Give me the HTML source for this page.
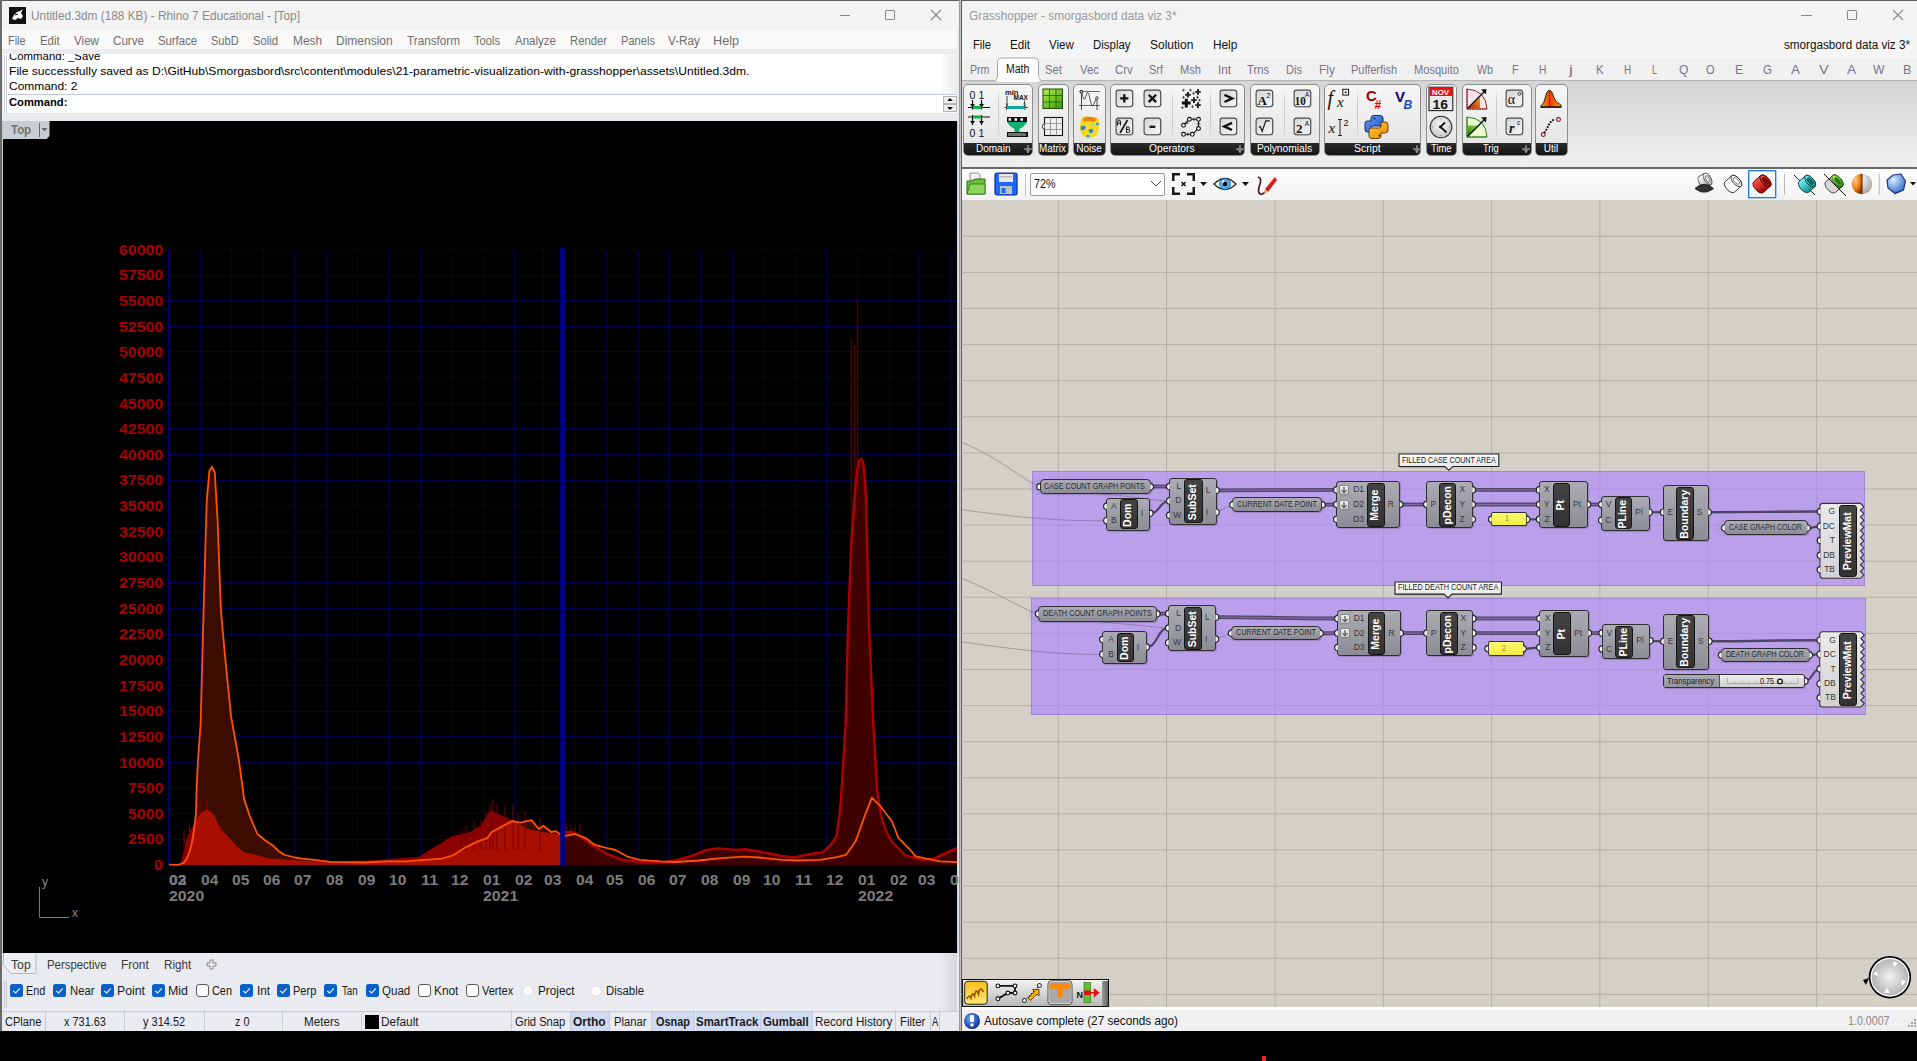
<!DOCTYPE html>
<html><head><meta charset="utf-8"><style>
html,body{margin:0;padding:0;background:#000;width:1917px;height:1061px;overflow:hidden;}
body{position:relative;font-family:"Liberation Sans",sans-serif;}
body div, body svg{position:absolute;}
body div div, body div svg{position:absolute;}

</style></head><body>
<div style="left:0px;top:0px;width:959px;height:1031px;background:#e9ebef;"></div>
<div style="left:0px;top:0px;width:959px;height:1px;background:#5a5a5a;"></div>
<div style="left:0px;top:0px;width:2px;height:1031px;background:#6b6b6b;"></div>
<div style="left:2px;top:1px;width:956px;height:29px;background:#f3f3f3;"></div>
<svg style="left:9px;top:7px;width:17px;height:17px" viewBox="0 0 17 17"><rect x="0" y="0" width="17" height="17" fill="#111"/><path d="M3 12 L5 8 L8 5 L11 4 L14 2 L12 6 L14 9 L12 12 L9 11 L6 13 Z" fill="#fff"/><path d="M6 8 L9 7" stroke="#111" stroke-width="1"/></svg>
<div style="left:31.30px;top:9.73px;font:12px/12px 'Liberation Sans', sans-serif;color:#8a8a8a;white-space:pre;transform:scaleX(0.9860);transform-origin:0 0;">Untitled.3dm (188 KB) - Rhino 7 Educational - [Top]</div>
<div style="left:840px;top:15px;width:10px;height:1px;background:#888;"></div>
<div style="left:885px;top:10px;width:10px;height:10px;border:1px solid #888;box-sizing:border-box;border-radius:1px;"></div>
<svg style="left:930px;top:9px;width:12px;height:12px" viewBox="0 0 12 12"><path d="M1 1 L11 11 M11 1 L1 11" stroke="#888" stroke-width="1.1"/></svg>
<div style="left:2px;top:30px;width:955px;height:19px;background:#f9f9f9;"></div>
<div style="left:8.30px;top:34.73px;font:12px/12px 'Liberation Sans', sans-serif;color:#6e6e6e;white-space:pre;transform:scaleX(0.9050);transform-origin:0 0;">File</div>
<div style="left:40.00px;top:34.73px;font:12px/12px 'Liberation Sans', sans-serif;color:#6e6e6e;white-space:pre;transform:scaleX(0.9478);transform-origin:0 0;">Edit</div>
<div style="left:74.00px;top:34.73px;font:12px/12px 'Liberation Sans', sans-serif;color:#6e6e6e;white-space:pre;transform:scaleX(0.9692);transform-origin:0 0;">View</div>
<div style="left:113.00px;top:34.73px;font:12px/12px 'Liberation Sans', sans-serif;color:#6e6e6e;white-space:pre;transform:scaleX(0.9684);transform-origin:0 0;">Curve</div>
<div style="left:158.00px;top:34.73px;font:12px/12px 'Liberation Sans', sans-serif;color:#6e6e6e;white-space:pre;transform:scaleX(0.9430);transform-origin:0 0;">Surface</div>
<div style="left:211.00px;top:34.73px;font:12px/12px 'Liberation Sans', sans-serif;color:#6e6e6e;white-space:pre;transform:scaleX(0.9194);transform-origin:0 0;">SubD</div>
<div style="left:253.00px;top:34.73px;font:12px/12px 'Liberation Sans', sans-serif;color:#6e6e6e;white-space:pre;transform:scaleX(0.9369);transform-origin:0 0;">Solid</div>
<div style="left:293.00px;top:34.73px;font:12px/12px 'Liberation Sans', sans-serif;color:#6e6e6e;white-space:pre;transform:scaleX(0.9883);transform-origin:0 0;">Mesh</div>
<div style="left:336.00px;top:34.73px;font:12px/12px 'Liberation Sans', sans-serif;color:#6e6e6e;white-space:pre;">Dimension</div>
<div style="left:407.00px;top:34.73px;font:12px/12px 'Liberation Sans', sans-serif;color:#6e6e6e;white-space:pre;transform:scaleX(0.9773);transform-origin:0 0;">Transform</div>
<div style="left:474.00px;top:34.73px;font:12px/12px 'Liberation Sans', sans-serif;color:#6e6e6e;white-space:pre;transform:scaleX(0.9281);transform-origin:0 0;">Tools</div>
<div style="left:515.00px;top:34.73px;font:12px/12px 'Liberation Sans', sans-serif;color:#6e6e6e;white-space:pre;transform:scaleX(0.9603);transform-origin:0 0;">Analyze</div>
<div style="left:570.00px;top:34.73px;font:12px/12px 'Liberation Sans', sans-serif;color:#6e6e6e;white-space:pre;transform:scaleX(0.9401);transform-origin:0 0;">Render</div>
<div style="left:621.00px;top:34.73px;font:12px/12px 'Liberation Sans', sans-serif;color:#6e6e6e;white-space:pre;transform:scaleX(0.9266);transform-origin:0 0;">Panels</div>
<div style="left:668.00px;top:34.73px;font:12px/12px 'Liberation Sans', sans-serif;color:#6e6e6e;white-space:pre;transform:scaleX(0.9792);transform-origin:0 0;">V-Ray</div>
<div style="left:713.00px;top:34.73px;font:12px/12px 'Liberation Sans', sans-serif;color:#6e6e6e;white-space:pre;transform:scaleX(1.0535);transform-origin:0 0;">Help</div>
<div style="left:3px;top:54px;width:954px;height:59px;background:#fff;"></div>
<div style="left:942px;top:54px;width:15px;height:41px;background:linear-gradient(90deg,#fbfbfb,#ececec);"></div>
<div style="left:4px;top:55px;width:1px;height:58px;background:#c9ced8;"></div>
<div style="left:6px;top:55px;width:1px;height:58px;background:#c9ced8;"></div>
<div style="left:0;top:54px;width:942px;height:41px;overflow:hidden">
<div style="left:9.00px;top:-2.80px;font:11.5px/11.5px 'Liberation Sans', sans-serif;color:#000;white-space:pre;transform:scaleX(0.9930);transform-origin:0 0;">Command: _Save</div>
<div style="left:9.00px;top:12.20px;font:11.5px/11.5px 'Liberation Sans', sans-serif;color:#000;white-space:pre;transform:scaleX(1.0502);transform-origin:0 0;">File successfully saved as D:\GitHub\Smorgasbord\src\content\modules\21-parametric-visualization-with-grasshopper\assets\Untitled.3dm.</div>
<div style="left:9.00px;top:26.90px;font:11.5px/11.5px 'Liberation Sans', sans-serif;color:#000;white-space:pre;transform:scaleX(1.0390);transform-origin:0 0;">Command: 2</div>
</div>
<div style="left:8px;top:94px;width:949px;height:1px;background:#c0c9dc;"></div>
<div style="left:9.00px;top:96.80px;font:11.5px/11.5px 'Liberation Sans', sans-serif;font-weight:bold;color:#000;white-space:pre;transform:scaleX(0.9724);transform-origin:0 0;">Command:</div>
<div style="left:943px;top:96px;width:14px;height:8px;background:#f0f0f0;border:1px solid #b5b5b5;box-sizing:border-box;"></div>
<div style="left:943px;top:104px;width:14px;height:8px;background:#f0f0f0;border:1px solid #b5b5b5;box-sizing:border-box;"></div>
<svg style="left:943px;top:96px;width:14px;height:16px" viewBox="0 0 14 16"><path d="M4 5 L10 5 L7 2 Z M4 11 L10 11 L7 14 Z" fill="#111"/></svg>
<div style="left:2px;top:121px;width:1px;height:832px;background:#c8c8c8;"></div>
<div style="left:3px;top:121px;width:954px;height:832px;background:#000;"></div>
<div style="left:957px;top:121px;width:2px;height:832px;background:#d3d9e3;"></div>
<svg style="left:3px;top:121px;width:954px;height:832px" viewBox="3 121 954 832">
<path d="M169 864.5 H960 M169 839.5 H960 M169 813.5 H960 M169 787.5 H960 M169 762.5 H960 M169 736.5 H960 M169 711.5 H960 M169 685.5 H960 M169 659.5 H960 M169 634.5 H960 M169 608.5 H960 M169 582.5 H960 M169 557.5 H960 M169 531.5 H960 M169 505.5 H960 M169 480.5 H960 M169 454.5 H960 M169 428.5 H960 M169 403.5 H960 M169 377.5 H960 M169 351.5 H960 M169 326.5 H960 M169 300.5 H960 M169 275.5 H960 M169 249.5 H960" stroke="#000054" stroke-width="1" fill="none"/>
<path d="M168.5 249.4 V864.9 M200.5 249.4 V864.9 M231.5 249.4 V864.9 M263.5 249.4 V864.9 M294.5 249.4 V864.9 M326.5 249.4 V864.9 M357.5 249.4 V864.9 M388.5 249.4 V864.9 M420.5 249.4 V864.9 M451.5 249.4 V864.9 M483.5 249.4 V864.9 M514.5 249.4 V864.9 M543.5 249.4 V864.9 M575.5 249.4 V864.9 M606.5 249.4 V864.9 M638.5 249.4 V864.9 M668.5 249.4 V864.9 M700.5 249.4 V864.9 M732.5 249.4 V864.9 M763.5 249.4 V864.9 M795.5 249.4 V864.9 M826.5 249.4 V864.9 M857.5 249.4 V864.9 M889.5 249.4 V864.9 M918.5 249.4 V864.9 M950.5 249.4 V864.9" stroke="#000042" stroke-width="1" fill="none"/>
<path d="M169.2 249 V865" stroke="#000080" stroke-width="1.8"/>
<polygon points="169.0,864.7 178.0,864.8 183.5,863.0 186.5,859.0 189.4,852.0 191.5,845.0 193.4,834.0 195.0,822.0 196.0,813.0 196.7,786.0 198.0,760.0 200.6,724.0 203.8,602.0 206.7,500.9 209.5,470.4 212.0,466.8 214.8,472.5 217.6,521.0 220.9,610.0 224.9,655.0 231.0,715.9 238.9,760.0 244.2,799.6 249.5,815.4 257.4,834.0 265.3,840.5 273.3,845.8 278.5,851.0 285.0,855.0 295.0,857.5 302.0,858.6 314.0,859.9 330.4,861.9 365.0,862.5 387.0,861.4 405.7,861.4 421.4,860.2 441.7,858.6 452.7,855.5 465.2,847.6 477.7,841.4 487.1,838.2 491.8,832.0 512.1,821.0 520.0,822.6 531.7,820.2 538.7,828.9 543.4,825.7 551.3,832.0 556.0,831.2 562.2,836.3 562.2,864.9 169,864.9" fill="#3c0c00"/>
<polygon points="169.0,864.7 178.0,864.5 180.8,863.0 184.8,846.0 187.4,836.5 191.4,828.6 196.7,818.0 202.0,812.0 207.2,809.5 213.8,814.2 220.4,828.6 227.0,835.2 236.3,845.8 244.2,852.4 257.4,855.0 268.0,858.3 285.0,859.6 293.9,859.9 322.0,862.0 371.3,860.2 418.2,857.0 430.8,849.2 451.1,836.7 469.9,832.0 480.8,825.7 490.2,810.0 496.5,813.2 512.1,820.2 527.8,828.9 543.4,832.0 562.2,835.1 562.2,864.9 169,864.9" fill="#8c0000"/>
<clipPath id="cl"><polygon points="169.0,864.7 178.0,864.5 180.8,863.0 184.8,846.0 187.4,836.5 191.4,828.6 196.7,818.0 202.0,812.0 207.2,809.5 213.8,814.2 220.4,828.6 227.0,835.2 236.3,845.8 244.2,852.4 257.4,855.0 268.0,858.3 285.0,859.6 293.9,859.9 322.0,862.0 371.3,860.2 418.2,857.0 430.8,849.2 451.1,836.7 469.9,832.0 480.8,825.7 490.2,810.0 496.5,813.2 512.1,820.2 527.8,828.9 543.4,832.0 562.2,835.1 562.2,864.9 169,864.9"/></clipPath>
<polygon clip-path="url(#cl)" points="169.0,864.7 178.0,864.8 183.5,863.0 186.5,859.0 189.4,852.0 191.5,845.0 193.4,834.0 195.0,822.0 196.0,813.0 196.7,786.0 198.0,760.0 200.6,724.0 203.8,602.0 206.7,500.9 209.5,470.4 212.0,466.8 214.8,472.5 217.6,521.0 220.9,610.0 224.9,655.0 231.0,715.9 238.9,760.0 244.2,799.6 249.5,815.4 257.4,834.0 265.3,840.5 273.3,845.8 278.5,851.0 285.0,855.0 295.0,857.5 302.0,858.6 314.0,859.9 330.4,861.9 365.0,862.5 387.0,861.4 405.7,861.4 421.4,860.2 441.7,858.6 452.7,855.5 465.2,847.6 477.7,841.4 487.1,838.2 491.8,832.0 512.1,821.0 520.0,822.6 531.7,820.2 538.7,828.9 543.4,825.7 551.3,832.0 556.0,831.2 562.2,836.3 562.2,864.9 169,864.9" fill="rgba(255,62,0,0.24)"/>
<path d="M481 820 V850 M486 812 V850 M490 803 V850 M493 799 V850 M497 804 V850 M505 806 V850 M513 806 V850 M518 813 V850 M525 811 V850 M540 818 V850 M456 834 V850 M462 829 V850 M466 826 V850 M474 822 V850 M566 822 V850 M571 826 V850 M575 826 V850 M580 823 V850" stroke="#7a0000" stroke-width="1" fill="none"/>
<path d="M189.4 823 V832 M200 802 V814 M206.6 799.5 V810 M221 826 V831 M184 830 V846" stroke="#8a0000" stroke-width="1" fill="none"/>
<polygon points="562.2,835.1 564.0,832.5 571.6,831.8 577.7,834.8 592.8,845.4 608.0,854.5 623.0,859.8 638.2,862.0 660.9,862.8 676.0,860.5 691.2,856.0 706.3,849.9 718.4,848.4 736.5,849.9 745.6,849.2 766.8,853.0 781.9,856.0 794.0,857.5 812.2,853.7 822.8,852.2 830.3,845.4 836.4,836.3 839.4,815.1 840.9,800.0 842.2,780.0 845.6,724.0 847.8,635.6 851.1,546.7 855.0,491.0 857.5,468.0 859.4,460.6 861.3,459.0 863.3,463.3 865.0,480.0 866.1,502.2 868.9,624.4 873.3,724.4 877.2,791.0 881.0,815.0 885.6,830.0 891.7,841.6 905.4,855.4 922.6,859.7 933.0,858.9 960.0,846.8 960,864.9 562.2,864.9" fill="#3e0000"/>
<path d="M851.5 338 V560 M857.5 300 V500 M855 345 V520" stroke="#500000" stroke-width="1.6"/>
<polyline points="562.2,835.1 564.0,832.5 571.6,831.8 577.7,834.8 592.8,845.4 608.0,854.5 623.0,859.8 638.2,862.0 660.9,862.8 676.0,860.5 691.2,856.0 706.3,849.9 718.4,848.4 736.5,849.9 745.6,849.2 766.8,853.0 781.9,856.0 794.0,857.5 812.2,853.7 822.8,852.2 830.3,845.4 836.4,836.3 839.4,815.1 840.9,800.0 842.2,780.0 845.6,724.0 847.8,635.6 851.1,546.7 855.0,491.0 857.5,468.0 859.4,460.6 861.3,459.0 863.3,463.3 865.0,480.0 866.1,502.2 868.9,624.4 873.3,724.4 877.2,791.0 881.0,815.0 885.6,830.0 891.7,841.6 905.4,855.4 922.6,859.7 933.0,858.9 960.0,846.8" stroke="#b00000" stroke-width="2.4" stroke-linejoin="round" fill="none"/>
<polyline points="169.0,864.7 178.0,864.8 183.5,863.0 186.5,859.0 189.4,852.0 191.5,845.0 193.4,834.0 195.0,822.0 196.0,813.0 196.7,786.0 198.0,760.0 200.6,724.0 203.8,602.0 206.7,500.9 209.5,470.4 212.0,466.8 214.8,472.5 217.6,521.0 220.9,610.0 224.9,655.0 231.0,715.9 238.9,760.0 244.2,799.6 249.5,815.4 257.4,834.0 265.3,840.5 273.3,845.8 278.5,851.0 285.0,855.0 295.0,857.5 302.0,858.6 314.0,859.9 330.4,861.9 365.0,862.5 387.0,861.4 405.7,861.4 421.4,860.2 441.7,858.6 452.7,855.5 465.2,847.6 477.7,841.4 487.1,838.2 491.8,832.0 512.1,821.0 520.0,822.6 531.7,820.2 538.7,828.9 543.4,825.7 551.3,832.0 556.0,831.2 562.6,836.3 574.7,834.0 585.3,837.8 594.3,844.6 605.0,847.7 615.5,850.0 627.6,856.7 639.7,859.8 660.9,861.3 676.0,862.0 698.7,860.5 721.4,858.2 744.0,856.7 759.2,857.5 781.9,859.8 797.0,860.5 819.7,859.8 836.6,857.1 845.0,855.2 846.9,853.7 855.5,841.6 864.1,817.5 871.9,797.7 881.3,807.2 891.7,821.0 898.5,838.2 908.9,848.5 915.8,856.3 939.9,861.4 960.0,862.3" stroke="#ff5200" stroke-width="1.8" fill="none" stroke-linejoin="round"/>
<rect x="560.2" y="247.2" width="4.7" height="618.5" rx="1.5" fill="#00008c"/>
</svg>
<div style="left:154.48px;top:858.13px;font:14.3px/14.3px 'Liberation Sans', sans-serif;font-weight:bold;color:#a80000;white-space:pre;transform:scaleX(1.1090);transform-origin:0 0;">0</div>
<div style="left:128.02px;top:832.49px;font:14.3px/14.3px 'Liberation Sans', sans-serif;font-weight:bold;color:#a80000;white-space:pre;transform:scaleX(1.1090);transform-origin:0 0;">2500</div>
<div style="left:128.02px;top:806.84px;font:14.3px/14.3px 'Liberation Sans', sans-serif;font-weight:bold;color:#a80000;white-space:pre;transform:scaleX(1.1090);transform-origin:0 0;">5000</div>
<div style="left:128.02px;top:781.20px;font:14.3px/14.3px 'Liberation Sans', sans-serif;font-weight:bold;color:#a80000;white-space:pre;transform:scaleX(1.1090);transform-origin:0 0;">7500</div>
<div style="left:119.20px;top:755.55px;font:14.3px/14.3px 'Liberation Sans', sans-serif;font-weight:bold;color:#a80000;white-space:pre;transform:scaleX(1.1090);transform-origin:0 0;">10000</div>
<div style="left:119.20px;top:729.90px;font:14.3px/14.3px 'Liberation Sans', sans-serif;font-weight:bold;color:#a80000;white-space:pre;transform:scaleX(1.1090);transform-origin:0 0;">12500</div>
<div style="left:119.20px;top:704.26px;font:14.3px/14.3px 'Liberation Sans', sans-serif;font-weight:bold;color:#a80000;white-space:pre;transform:scaleX(1.1090);transform-origin:0 0;">15000</div>
<div style="left:119.20px;top:678.61px;font:14.3px/14.3px 'Liberation Sans', sans-serif;font-weight:bold;color:#a80000;white-space:pre;transform:scaleX(1.1090);transform-origin:0 0;">17500</div>
<div style="left:119.20px;top:652.97px;font:14.3px/14.3px 'Liberation Sans', sans-serif;font-weight:bold;color:#a80000;white-space:pre;transform:scaleX(1.1090);transform-origin:0 0;">20000</div>
<div style="left:119.20px;top:627.32px;font:14.3px/14.3px 'Liberation Sans', sans-serif;font-weight:bold;color:#a80000;white-space:pre;transform:scaleX(1.1090);transform-origin:0 0;">22500</div>
<div style="left:119.20px;top:601.67px;font:14.3px/14.3px 'Liberation Sans', sans-serif;font-weight:bold;color:#a80000;white-space:pre;transform:scaleX(1.1090);transform-origin:0 0;">25000</div>
<div style="left:119.20px;top:576.03px;font:14.3px/14.3px 'Liberation Sans', sans-serif;font-weight:bold;color:#a80000;white-space:pre;transform:scaleX(1.1090);transform-origin:0 0;">27500</div>
<div style="left:119.20px;top:550.38px;font:14.3px/14.3px 'Liberation Sans', sans-serif;font-weight:bold;color:#a80000;white-space:pre;transform:scaleX(1.1090);transform-origin:0 0;">30000</div>
<div style="left:119.20px;top:524.74px;font:14.3px/14.3px 'Liberation Sans', sans-serif;font-weight:bold;color:#a80000;white-space:pre;transform:scaleX(1.1090);transform-origin:0 0;">32500</div>
<div style="left:119.20px;top:499.09px;font:14.3px/14.3px 'Liberation Sans', sans-serif;font-weight:bold;color:#a80000;white-space:pre;transform:scaleX(1.1090);transform-origin:0 0;">35000</div>
<div style="left:119.20px;top:473.44px;font:14.3px/14.3px 'Liberation Sans', sans-serif;font-weight:bold;color:#a80000;white-space:pre;transform:scaleX(1.1090);transform-origin:0 0;">37500</div>
<div style="left:119.20px;top:447.80px;font:14.3px/14.3px 'Liberation Sans', sans-serif;font-weight:bold;color:#a80000;white-space:pre;transform:scaleX(1.1090);transform-origin:0 0;">40000</div>
<div style="left:119.20px;top:422.15px;font:14.3px/14.3px 'Liberation Sans', sans-serif;font-weight:bold;color:#a80000;white-space:pre;transform:scaleX(1.1090);transform-origin:0 0;">42500</div>
<div style="left:119.20px;top:396.51px;font:14.3px/14.3px 'Liberation Sans', sans-serif;font-weight:bold;color:#a80000;white-space:pre;transform:scaleX(1.1090);transform-origin:0 0;">45000</div>
<div style="left:119.20px;top:370.86px;font:14.3px/14.3px 'Liberation Sans', sans-serif;font-weight:bold;color:#a80000;white-space:pre;transform:scaleX(1.1090);transform-origin:0 0;">47500</div>
<div style="left:119.20px;top:345.21px;font:14.3px/14.3px 'Liberation Sans', sans-serif;font-weight:bold;color:#a80000;white-space:pre;transform:scaleX(1.1090);transform-origin:0 0;">50000</div>
<div style="left:119.20px;top:319.57px;font:14.3px/14.3px 'Liberation Sans', sans-serif;font-weight:bold;color:#a80000;white-space:pre;transform:scaleX(1.1090);transform-origin:0 0;">52500</div>
<div style="left:119.20px;top:293.92px;font:14.3px/14.3px 'Liberation Sans', sans-serif;font-weight:bold;color:#a80000;white-space:pre;transform:scaleX(1.1090);transform-origin:0 0;">55000</div>
<div style="left:119.20px;top:268.28px;font:14.3px/14.3px 'Liberation Sans', sans-serif;font-weight:bold;color:#a80000;white-space:pre;transform:scaleX(1.1090);transform-origin:0 0;">57500</div>
<div style="left:119.20px;top:242.63px;font:14.3px/14.3px 'Liberation Sans', sans-serif;font-weight:bold;color:#a80000;white-space:pre;transform:scaleX(1.1090);transform-origin:0 0;">60000</div>
<div style="left:169.00px;top:873.47px;font:14px/14px 'Liberation Sans', sans-serif;font-weight:bold;color:#7c7c7c;white-space:pre;transform:scaleX(1.1173);transform-origin:0 0;">02</div>
<div style="left:169.00px;top:873.47px;font:14px/14px 'Liberation Sans', sans-serif;font-weight:bold;color:#7c7c7c;white-space:pre;transform:scaleX(1.1173);transform-origin:0 0;">03</div>
<div style="left:200.82px;top:873.47px;font:14px/14px 'Liberation Sans', sans-serif;font-weight:bold;color:#7c7c7c;white-space:pre;transform:scaleX(1.1173);transform-origin:0 0;">04</div>
<div style="left:231.62px;top:873.47px;font:14px/14px 'Liberation Sans', sans-serif;font-weight:bold;color:#7c7c7c;white-space:pre;transform:scaleX(1.1173);transform-origin:0 0;">05</div>
<div style="left:263.45px;top:873.47px;font:14px/14px 'Liberation Sans', sans-serif;font-weight:bold;color:#7c7c7c;white-space:pre;transform:scaleX(1.1173);transform-origin:0 0;">06</div>
<div style="left:294.25px;top:873.47px;font:14px/14px 'Liberation Sans', sans-serif;font-weight:bold;color:#7c7c7c;white-space:pre;transform:scaleX(1.1173);transform-origin:0 0;">07</div>
<div style="left:326.07px;top:873.47px;font:14px/14px 'Liberation Sans', sans-serif;font-weight:bold;color:#7c7c7c;white-space:pre;transform:scaleX(1.1173);transform-origin:0 0;">08</div>
<div style="left:357.89px;top:873.47px;font:14px/14px 'Liberation Sans', sans-serif;font-weight:bold;color:#7c7c7c;white-space:pre;transform:scaleX(1.1173);transform-origin:0 0;">09</div>
<div style="left:388.69px;top:873.47px;font:14px/14px 'Liberation Sans', sans-serif;font-weight:bold;color:#7c7c7c;white-space:pre;transform:scaleX(1.1173);transform-origin:0 0;">10</div>
<div style="left:420.52px;top:873.47px;font:14px/14px 'Liberation Sans', sans-serif;font-weight:bold;color:#7c7c7c;white-space:pre;transform:scaleX(1.1756);transform-origin:0 0;">11</div>
<div style="left:451.31px;top:873.47px;font:14px/14px 'Liberation Sans', sans-serif;font-weight:bold;color:#7c7c7c;white-space:pre;transform:scaleX(1.1173);transform-origin:0 0;">12</div>
<div style="left:483.14px;top:873.47px;font:14px/14px 'Liberation Sans', sans-serif;font-weight:bold;color:#7c7c7c;white-space:pre;transform:scaleX(1.1173);transform-origin:0 0;">01</div>
<div style="left:514.96px;top:873.47px;font:14px/14px 'Liberation Sans', sans-serif;font-weight:bold;color:#7c7c7c;white-space:pre;transform:scaleX(1.1173);transform-origin:0 0;">02</div>
<div style="left:543.71px;top:873.47px;font:14px/14px 'Liberation Sans', sans-serif;font-weight:bold;color:#7c7c7c;white-space:pre;transform:scaleX(1.1173);transform-origin:0 0;">03</div>
<div style="left:575.53px;top:873.47px;font:14px/14px 'Liberation Sans', sans-serif;font-weight:bold;color:#7c7c7c;white-space:pre;transform:scaleX(1.1173);transform-origin:0 0;">04</div>
<div style="left:606.33px;top:873.47px;font:14px/14px 'Liberation Sans', sans-serif;font-weight:bold;color:#7c7c7c;white-space:pre;transform:scaleX(1.1173);transform-origin:0 0;">05</div>
<div style="left:638.16px;top:873.47px;font:14px/14px 'Liberation Sans', sans-serif;font-weight:bold;color:#7c7c7c;white-space:pre;transform:scaleX(1.1173);transform-origin:0 0;">06</div>
<div style="left:668.95px;top:873.47px;font:14px/14px 'Liberation Sans', sans-serif;font-weight:bold;color:#7c7c7c;white-space:pre;transform:scaleX(1.1173);transform-origin:0 0;">07</div>
<div style="left:700.78px;top:873.47px;font:14px/14px 'Liberation Sans', sans-serif;font-weight:bold;color:#7c7c7c;white-space:pre;transform:scaleX(1.1173);transform-origin:0 0;">08</div>
<div style="left:732.60px;top:873.47px;font:14px/14px 'Liberation Sans', sans-serif;font-weight:bold;color:#7c7c7c;white-space:pre;transform:scaleX(1.1173);transform-origin:0 0;">09</div>
<div style="left:763.40px;top:873.47px;font:14px/14px 'Liberation Sans', sans-serif;font-weight:bold;color:#7c7c7c;white-space:pre;transform:scaleX(1.1173);transform-origin:0 0;">10</div>
<div style="left:795.23px;top:873.47px;font:14px/14px 'Liberation Sans', sans-serif;font-weight:bold;color:#7c7c7c;white-space:pre;transform:scaleX(1.1756);transform-origin:0 0;">11</div>
<div style="left:826.02px;top:873.47px;font:14px/14px 'Liberation Sans', sans-serif;font-weight:bold;color:#7c7c7c;white-space:pre;transform:scaleX(1.1173);transform-origin:0 0;">12</div>
<div style="left:857.85px;top:873.47px;font:14px/14px 'Liberation Sans', sans-serif;font-weight:bold;color:#7c7c7c;white-space:pre;transform:scaleX(1.1173);transform-origin:0 0;">01</div>
<div style="left:889.67px;top:873.47px;font:14px/14px 'Liberation Sans', sans-serif;font-weight:bold;color:#7c7c7c;white-space:pre;transform:scaleX(1.1173);transform-origin:0 0;">02</div>
<div style="left:918.42px;top:873.47px;font:14px/14px 'Liberation Sans', sans-serif;font-weight:bold;color:#7c7c7c;white-space:pre;transform:scaleX(1.1173);transform-origin:0 0;">03</div>
<div style="left:950.24px;top:873.47px;font:14px/14px 'Liberation Sans', sans-serif;font-weight:bold;color:#7c7c7c;white-space:pre;transform:scaleX(1.1173);transform-origin:0 0;">04</div>
<div style="left:169.00px;top:888.57px;font:14px/14px 'Liberation Sans', sans-serif;font-weight:bold;color:#7c7c7c;white-space:pre;transform:scaleX(1.1302);transform-origin:0 0;">2020</div>
<div style="left:483.14px;top:888.57px;font:14px/14px 'Liberation Sans', sans-serif;font-weight:bold;color:#7c7c7c;white-space:pre;transform:scaleX(1.1302);transform-origin:0 0;">2021</div>
<div style="left:857.85px;top:888.57px;font:14px/14px 'Liberation Sans', sans-serif;font-weight:bold;color:#7c7c7c;white-space:pre;transform:scaleX(1.1302);transform-origin:0 0;">2022</div>
<svg style="left:30px;top:872px;width:60px;height:50px" viewBox="30 872 60 50"><path d="M39.5 887 V917.5 H69" stroke="#7a7a7a" stroke-width="1" fill="none"/></svg>
<div style="left:42.00px;top:875.93px;font:12px/12px 'Liberation Sans', sans-serif;color:#8a8a8a;white-space:pre;">y</div>
<div style="left:72.00px;top:906.73px;font:12px/12px 'Liberation Sans', sans-serif;color:#8a8a8a;white-space:pre;">x</div>
<svg style="left:3px;top:121px;width:47px;height:18px" viewBox="0 0 47 18"><path d="M0 0 H46.5 V15 L43.5 18 H0 Z" fill="#c9cdd4"/><path d="M36.5 2 V16" stroke="#6a6a6a" stroke-width="1"/><path d="M38.5 7 H44.5 L41.5 10.5 Z" fill="#6a6a6a"/></svg>
<div style="left:10.70px;top:123.77px;font:12.5px/12.5px 'Liberation Sans', sans-serif;font-weight:bold;color:#707070;white-space:pre;transform:scaleX(0.9145);transform-origin:0 0;">Top</div>
<div style="left:2px;top:953px;width:955px;height:58px;background:#e9ebf0;"></div>
<svg style="left:3px;top:953px;width:34px;height:22px" viewBox="0 0 34 22"><path d="M0.5 0 V12 L8 20.5 H32 Q33 20.5 33 19.5 V2 L34 0" fill="#eceef3" stroke="#a9bad2" stroke-width="1"/></svg>
<div style="left:11.00px;top:959.13px;font:12px/12px 'Liberation Sans', sans-serif;color:#3a3a3a;white-space:pre;transform:scaleX(1.0182);transform-origin:0 0;">Top</div>
<div style="left:46.50px;top:959.13px;font:12px/12px 'Liberation Sans', sans-serif;color:#3a3a3a;white-space:pre;transform:scaleX(0.9490);transform-origin:0 0;">Perspective</div>
<div style="left:121.30px;top:959.13px;font:12px/12px 'Liberation Sans', sans-serif;color:#3a3a3a;white-space:pre;transform:scaleX(0.9890);transform-origin:0 0;">Front</div>
<div style="left:164.30px;top:959.13px;font:12px/12px 'Liberation Sans', sans-serif;color:#3a3a3a;white-space:pre;transform:scaleX(0.9745);transform-origin:0 0;">Right</div>
<svg style="left:206px;top:959px;width:11px;height:11px" viewBox="0 0 11 11"><path d="M4 1 H7 V4 H10 V7 H7 V10 H4 V7 H1 V4 H4 Z" fill="none" stroke="#8a8a8a" stroke-width="1"/></svg>
<div style="left:4px;top:981px;width:1px;height:27px;background:#c8ccd6;"></div>
<div style="left:6px;top:981px;width:1px;height:27px;background:#c8ccd6;"></div>
<svg style="left:10px;top:984px;width:13px;height:13px" viewBox="0 0 13 13"><rect x="0" y="0" width="13" height="13" rx="2.5" fill="#0a5fc9"/><path d="M3.3 6.8 L5.6 9 L9.8 4.3" stroke="#fff" stroke-width="1.1" fill="none"/></svg>
<div style="left:26.20px;top:984.73px;font:12px/12px 'Liberation Sans', sans-serif;color:#1a1a1a;white-space:pre;transform:scaleX(0.8992);transform-origin:0 0;">End</div>
<svg style="left:53px;top:984px;width:13px;height:13px" viewBox="0 0 13 13"><rect x="0" y="0" width="13" height="13" rx="2.5" fill="#0a5fc9"/><path d="M3.3 6.8 L5.6 9 L9.8 4.3" stroke="#fff" stroke-width="1.1" fill="none"/></svg>
<div style="left:69.50px;top:984.73px;font:12px/12px 'Liberation Sans', sans-serif;color:#1a1a1a;white-space:pre;transform:scaleX(0.9419);transform-origin:0 0;">Near</div>
<svg style="left:101px;top:984px;width:13px;height:13px" viewBox="0 0 13 13"><rect x="0" y="0" width="13" height="13" rx="2.5" fill="#0a5fc9"/><path d="M3.3 6.8 L5.6 9 L9.8 4.3" stroke="#fff" stroke-width="1.1" fill="none"/></svg>
<div style="left:117.00px;top:984.73px;font:12px/12px 'Liberation Sans', sans-serif;color:#1a1a1a;white-space:pre;transform:scaleX(1.0237);transform-origin:0 0;">Point</div>
<svg style="left:152px;top:984px;width:13px;height:13px" viewBox="0 0 13 13"><rect x="0" y="0" width="13" height="13" rx="2.5" fill="#0a5fc9"/><path d="M3.3 6.8 L5.6 9 L9.8 4.3" stroke="#fff" stroke-width="1.1" fill="none"/></svg>
<div style="left:168.00px;top:984.73px;font:12px/12px 'Liberation Sans', sans-serif;color:#1a1a1a;white-space:pre;transform:scaleX(1.0343);transform-origin:0 0;">Mid</div>
<svg style="left:196px;top:984px;width:13px;height:13px" viewBox="0 0 13 13"><rect x="0.5" y="0.5" width="12" height="12" rx="2.5" fill="#fff" stroke="#5a5a5a" stroke-width="1"/></svg>
<div style="left:212.00px;top:984.73px;font:12px/12px 'Liberation Sans', sans-serif;color:#1a1a1a;white-space:pre;transform:scaleX(0.9085);transform-origin:0 0;">Cen</div>
<svg style="left:240px;top:984px;width:13px;height:13px" viewBox="0 0 13 13"><rect x="0" y="0" width="13" height="13" rx="2.5" fill="#0a5fc9"/><path d="M3.3 6.8 L5.6 9 L9.8 4.3" stroke="#fff" stroke-width="1.1" fill="none"/></svg>
<div style="left:256.60px;top:984.73px;font:12px/12px 'Liberation Sans', sans-serif;color:#1a1a1a;white-space:pre;transform:scaleX(0.9819);transform-origin:0 0;">Int</div>
<svg style="left:277px;top:984px;width:13px;height:13px" viewBox="0 0 13 13"><rect x="0" y="0" width="13" height="13" rx="2.5" fill="#0a5fc9"/><path d="M3.3 6.8 L5.6 9 L9.8 4.3" stroke="#fff" stroke-width="1.1" fill="none"/></svg>
<div style="left:293.40px;top:984.73px;font:12px/12px 'Liberation Sans', sans-serif;color:#1a1a1a;white-space:pre;transform:scaleX(0.9192);transform-origin:0 0;">Perp</div>
<svg style="left:324px;top:984px;width:13px;height:13px" viewBox="0 0 13 13"><rect x="0" y="0" width="13" height="13" rx="2.5" fill="#0a5fc9"/><path d="M3.3 6.8 L5.6 9 L9.8 4.3" stroke="#fff" stroke-width="1.1" fill="none"/></svg>
<div style="left:341.80px;top:984.73px;font:12px/12px 'Liberation Sans', sans-serif;color:#1a1a1a;white-space:pre;transform:scaleX(0.8114);transform-origin:0 0;">Tan</div>
<svg style="left:366px;top:984px;width:13px;height:13px" viewBox="0 0 13 13"><rect x="0" y="0" width="13" height="13" rx="2.5" fill="#0a5fc9"/><path d="M3.3 6.8 L5.6 9 L9.8 4.3" stroke="#fff" stroke-width="1.1" fill="none"/></svg>
<div style="left:382.30px;top:984.73px;font:12px/12px 'Liberation Sans', sans-serif;color:#1a1a1a;white-space:pre;transform:scaleX(0.9640);transform-origin:0 0;">Quad</div>
<svg style="left:418px;top:984px;width:13px;height:13px" viewBox="0 0 13 13"><rect x="0.5" y="0.5" width="12" height="12" rx="2.5" fill="#fff" stroke="#5a5a5a" stroke-width="1"/></svg>
<div style="left:434.40px;top:984.73px;font:12px/12px 'Liberation Sans', sans-serif;color:#1a1a1a;white-space:pre;transform:scaleX(0.9844);transform-origin:0 0;">Knot</div>
<svg style="left:466px;top:984px;width:13px;height:13px" viewBox="0 0 13 13"><rect x="0.5" y="0.5" width="12" height="12" rx="2.5" fill="#fff" stroke="#5a5a5a" stroke-width="1"/></svg>
<div style="left:482.00px;top:984.73px;font:12px/12px 'Liberation Sans', sans-serif;color:#1a1a1a;white-space:pre;transform:scaleX(0.9171);transform-origin:0 0;">Vertex</div>
<svg style="left:522px;top:985px;width:12px;height:12px" viewBox="0 0 12 12"><circle cx="6" cy="6" r="5.5" fill="#fafafa" stroke="#dcdde2" stroke-width="1"/></svg>
<div style="left:538.20px;top:984.73px;font:12px/12px 'Liberation Sans', sans-serif;color:#1a1a1a;white-space:pre;transform:scaleX(0.9799);transform-origin:0 0;">Project</div>
<svg style="left:590px;top:985px;width:12px;height:12px" viewBox="0 0 12 12"><circle cx="6" cy="6" r="5.5" fill="#fafafa" stroke="#dcdde2" stroke-width="1"/></svg>
<div style="left:606.00px;top:984.73px;font:12px/12px 'Liberation Sans', sans-serif;color:#1a1a1a;white-space:pre;transform:scaleX(0.9495);transform-origin:0 0;">Disable</div>
<div style="left:940px;top:953px;width:17px;height:78px;background:linear-gradient(90deg,rgba(233,235,240,0),#d5d6da);"></div>
<div style="left:2px;top:1011px;width:956px;height:1px;background:#c3cde0;"></div>
<div style="left:2px;top:1012px;width:955px;height:19px;background:#e9ebf0;"></div>
<div style="left:45.3px;top:1012px;width:1px;height:19px;background:#c3cde0;"></div>
<div style="left:124.4px;top:1012px;width:1px;height:19px;background:#c3cde0;"></div>
<div style="left:203.6px;top:1012px;width:1px;height:19px;background:#c3cde0;"></div>
<div style="left:282.4px;top:1012px;width:1px;height:19px;background:#c3cde0;"></div>
<div style="left:361.3px;top:1012px;width:1px;height:19px;background:#c3cde0;"></div>
<div style="left:511.3px;top:1012px;width:1px;height:19px;background:#c3cde0;"></div>
<div style="left:4.50px;top:1015.63px;font:12px/12px 'Liberation Sans', sans-serif;color:#1a1a1a;white-space:pre;transform:scaleX(0.9223);transform-origin:0 0;">CPlane</div>
<div style="left:63.80px;top:1015.63px;font:12px/12px 'Liberation Sans', sans-serif;color:#1a1a1a;white-space:pre;transform:scaleX(0.9101);transform-origin:0 0;">x 731.63</div>
<div style="left:142.70px;top:1015.63px;font:12px/12px 'Liberation Sans', sans-serif;color:#1a1a1a;white-space:pre;transform:scaleX(0.9145);transform-origin:0 0;">y 314.52</div>
<div style="left:235.40px;top:1015.63px;font:12px/12px 'Liberation Sans', sans-serif;color:#1a1a1a;white-space:pre;transform:scaleX(0.9058);transform-origin:0 0;">z 0</div>
<div style="left:304.20px;top:1015.63px;font:12px/12px 'Liberation Sans', sans-serif;color:#1a1a1a;white-space:pre;transform:scaleX(0.9707);transform-origin:0 0;">Meters</div>
<div style="left:365px;top:1015px;width:14px;height:14px;background:#000;"></div>
<div style="left:381.00px;top:1015.63px;font:12px/12px 'Liberation Sans', sans-serif;color:#1a1a1a;white-space:pre;transform:scaleX(0.9889);transform-origin:0 0;">Default</div>
<div style="left:569.7px;top:1012px;width:1px;height:19px;background:#c3cde0;"></div>
<div style="left:511.3px;top:1012px;width:58.400000000000034px;height:19px;overflow:hidden">
<div style="left:3.80px;top:3.63px;font:12px/12px 'Liberation Sans', sans-serif;color:#1a1a1a;white-space:pre;transform:scaleX(0.9291);transform-origin:0 0;">Grid Snap</div>
</div>
<div style="left:570.7px;top:1012px;width:38.0px;height:19px;background:#cfdaf0;"></div>
<div style="left:608.7px;top:1012px;width:1px;height:19px;background:#c3cde0;"></div>
<div style="left:569.7px;top:1012px;width:39.0px;height:19px;overflow:hidden">
<div style="left:3.30px;top:3.63px;font:12px/12px 'Liberation Sans', sans-serif;font-weight:bold;color:#1a1a1a;white-space:pre;">Ortho</div>
</div>
<div style="left:651.3px;top:1012px;width:1px;height:19px;background:#c3cde0;"></div>
<div style="left:608.7px;top:1012px;width:42.59999999999991px;height:19px;overflow:hidden">
<div style="left:5.50px;top:3.63px;font:12px/12px 'Liberation Sans', sans-serif;color:#1a1a1a;white-space:pre;transform:scaleX(0.9369);transform-origin:0 0;">Planar</div>
</div>
<div style="left:652.3px;top:1012px;width:41.700000000000045px;height:19px;background:#cfdaf0;"></div>
<div style="left:694px;top:1012px;width:1px;height:19px;background:#c3cde0;"></div>
<div style="left:651.3px;top:1012px;width:42.700000000000045px;height:19px;overflow:hidden">
<div style="left:4.40px;top:3.63px;font:12px/12px 'Liberation Sans', sans-serif;font-weight:bold;color:#1a1a1a;white-space:pre;transform:scaleX(0.9078);transform-origin:0 0;">Osnap</div>
</div>
<div style="left:695.5px;top:1012px;width:64.10000000000002px;height:19px;background:#cfdaf0;"></div>
<div style="left:759.6px;top:1012px;width:1px;height:19px;background:#c3cde0;"></div>
<div style="left:694.5px;top:1012px;width:65.10000000000002px;height:19px;overflow:hidden">
<div style="left:1.80px;top:3.63px;font:12px/12px 'Liberation Sans', sans-serif;font-weight:bold;color:#1a1a1a;white-space:pre;transform:scaleX(0.9545);transform-origin:0 0;">SmartTrack</div>
</div>
<div style="left:760.6px;top:1012px;width:51.60000000000002px;height:19px;background:#cfdaf0;"></div>
<div style="left:812.2px;top:1012px;width:1px;height:19px;background:#c3cde0;"></div>
<div style="left:759.6px;top:1012px;width:52.60000000000002px;height:19px;overflow:hidden">
<div style="left:3.70px;top:3.63px;font:12px/12px 'Liberation Sans', sans-serif;font-weight:bold;color:#1a1a1a;white-space:pre;transform:scaleX(0.9499);transform-origin:0 0;">Gumball</div>
</div>
<div style="left:894.6px;top:1012px;width:1px;height:19px;background:#c3cde0;"></div>
<div style="left:812.2px;top:1012px;width:82.39999999999998px;height:19px;overflow:hidden">
<div style="left:3.00px;top:3.63px;font:12px/12px 'Liberation Sans', sans-serif;color:#1a1a1a;white-space:pre;transform:scaleX(0.9741);transform-origin:0 0;">Record History</div>
</div>
<div style="left:930.4px;top:1012px;width:1px;height:19px;background:#c3cde0;"></div>
<div style="left:894.6px;top:1012px;width:35.799999999999955px;height:19px;overflow:hidden">
<div style="left:5.70px;top:3.63px;font:12px/12px 'Liberation Sans', sans-serif;color:#1a1a1a;white-space:pre;transform:scaleX(0.9487);transform-origin:0 0;">Filter</div>
</div>
<div style="left:939.1px;top:1012px;width:1px;height:19px;background:#c3cde0;"></div>
<div style="left:930.4px;top:1012px;width:8.700000000000045px;height:19px;overflow:hidden">
<div style="left:1.90px;top:3.63px;font:12px/12px 'Liberation Sans', sans-serif;color:#1a1a1a;white-space:pre;transform:scaleX(0.7871);transform-origin:0 0;">A</div>
</div>
<div style="left:959px;top:0px;width:958px;height:1031px;background:#f0f0f0;"></div>
<div style="left:959px;top:0px;width:958px;height:1px;background:#5a5a5a;"></div>
<div style="left:959px;top:0px;width:1px;height:1031px;background:#9a9a9a;"></div>
<div style="left:960px;top:0px;width:0.6px;height:1031px;background:#c0c0c0;"></div>
<div style="left:960.6px;top:0px;width:1.4px;height:1031px;background:#606060;"></div>
<div style="left:961.5px;top:1px;width:955.5px;height:29px;background:#f3f3f3;"></div>
<div style="left:969.00px;top:9.93px;font:12px/12px 'Liberation Sans', sans-serif;color:#9a9a9a;white-space:pre;transform:scaleX(0.9908);transform-origin:0 0;">Grasshopper - smorgasbord data viz 3*</div>
<div style="left:1801px;top:15px;width:11px;height:1px;background:#8a8a8a;"></div>
<div style="left:1847px;top:10px;width:10px;height:10px;border:1px solid #8a8a8a;box-sizing:border-box;border-radius:1px;"></div>
<svg style="left:1892px;top:9px;width:12px;height:12px" viewBox="0 0 12 12"><path d="M1 1 L11 11 M11 1 L1 11" stroke="#8a8a8a" stroke-width="1.1"/></svg>
<div style="left:961.5px;top:30px;width:955.5px;height:28px;background:#f5f5f5;"></div>
<div style="left:973.00px;top:39.37px;font:12.5px/12.5px 'Liberation Sans', sans-serif;color:#111;white-space:pre;transform:scaleX(0.8936);transform-origin:0 0;">File</div>
<div style="left:1009.80px;top:39.37px;font:12.5px/12.5px 'Liberation Sans', sans-serif;color:#111;white-space:pre;transform:scaleX(0.9331);transform-origin:0 0;">Edit</div>
<div style="left:1048.90px;top:39.37px;font:12.5px/12.5px 'Liberation Sans', sans-serif;color:#111;white-space:pre;transform:scaleX(0.9230);transform-origin:0 0;">View</div>
<div style="left:1093.20px;top:39.37px;font:12.5px/12.5px 'Liberation Sans', sans-serif;color:#111;white-space:pre;transform:scaleX(0.9174);transform-origin:0 0;">Display</div>
<div style="left:1150.00px;top:39.37px;font:12.5px/12.5px 'Liberation Sans', sans-serif;color:#111;white-space:pre;transform:scaleX(0.9607);transform-origin:0 0;">Solution</div>
<div style="left:1213.40px;top:39.37px;font:12.5px/12.5px 'Liberation Sans', sans-serif;color:#111;white-space:pre;transform:scaleX(0.9452);transform-origin:0 0;">Help</div>
<div style="left:1784.00px;top:39.37px;font:12.5px/12.5px 'Liberation Sans', sans-serif;color:#111;white-space:pre;transform:scaleX(0.9348);transform-origin:0 0;">smorgasbord data viz 3*</div>
<div style="left:961.5px;top:58px;width:955.5px;height:22px;background:#f0f0f0;"></div>
<div style="left:961.5px;top:80px;width:955.5px;height:88px;background:linear-gradient(180deg,#d4d4d4,#f0f0f0);"></div>
<div style="left:961.5px;top:79.5px;width:955.5px;height:1px;background:#b4b4b4;"></div>
<svg style="left:993px;top:57px;width:52px;height:25px" viewBox="0 0 52 25"><path d="M0 24 Q4 24 4.5 19 V6 Q4.5 1 9 1 H41 Q45.5 1 45.5 6 V19 Q46 24 51 24" fill="#fdfdfd" stroke="#a8a8a8" stroke-width="1"/><rect x="5" y="20" width="41" height="5" fill="#fdfdfd"/></svg>
<div style="left:969.60px;top:64.37px;font:12.5px/12.5px 'Liberation Sans', sans-serif;color:#7a7488;white-space:pre;transform:scaleX(0.8466);transform-origin:0 0;">Prm</div>
<div style="left:1005.60px;top:62.57px;font:12.5px/12.5px 'Liberation Sans', sans-serif;color:#111;white-space:pre;transform:scaleX(0.8420);transform-origin:0 0;">Math</div>
<div style="left:1045.00px;top:64.37px;font:12.5px/12.5px 'Liberation Sans', sans-serif;color:#7a7488;white-space:pre;transform:scaleX(0.9061);transform-origin:0 0;">Set</div>
<div style="left:1080.00px;top:64.37px;font:12.5px/12.5px 'Liberation Sans', sans-serif;color:#7a7488;white-space:pre;transform:scaleX(0.9112);transform-origin:0 0;">Vec</div>
<div style="left:1115.00px;top:64.37px;font:12.5px/12.5px 'Liberation Sans', sans-serif;color:#7a7488;white-space:pre;transform:scaleX(0.9156);transform-origin:0 0;">Crv</div>
<div style="left:1149.00px;top:64.37px;font:12.5px/12.5px 'Liberation Sans', sans-serif;color:#7a7488;white-space:pre;transform:scaleX(0.8764);transform-origin:0 0;">Srf</div>
<div style="left:1180.00px;top:64.37px;font:12.5px/12.5px 'Liberation Sans', sans-serif;color:#7a7488;white-space:pre;transform:scaleX(0.8893);transform-origin:0 0;">Msh</div>
<div style="left:1218.00px;top:64.37px;font:12.5px/12.5px 'Liberation Sans', sans-serif;color:#7a7488;white-space:pre;transform:scaleX(0.9354);transform-origin:0 0;">Int</div>
<div style="left:1247.00px;top:64.37px;font:12.5px/12.5px 'Liberation Sans', sans-serif;color:#7a7488;white-space:pre;transform:scaleX(0.8966);transform-origin:0 0;">Trns</div>
<div style="left:1286.00px;top:64.37px;font:12.5px/12.5px 'Liberation Sans', sans-serif;color:#7a7488;white-space:pre;transform:scaleX(0.8862);transform-origin:0 0;">Dis</div>
<div style="left:1319.00px;top:64.37px;font:12.5px/12.5px 'Liberation Sans', sans-serif;color:#7a7488;white-space:pre;transform:scaleX(0.9602);transform-origin:0 0;">Fly</div>
<div style="left:1351.00px;top:64.37px;font:12.5px/12.5px 'Liberation Sans', sans-serif;color:#7a7488;white-space:pre;transform:scaleX(0.8749);transform-origin:0 0;">Pufferfish</div>
<div style="left:1414.00px;top:64.37px;font:12.5px/12.5px 'Liberation Sans', sans-serif;color:#7a7488;white-space:pre;transform:scaleX(0.8872);transform-origin:0 0;">Mosquito</div>
<div style="left:1477.00px;top:64.37px;font:12.5px/12.5px 'Liberation Sans', sans-serif;color:#7a7488;white-space:pre;transform:scaleX(0.8533);transform-origin:0 0;">Wb</div>
<div style="left:1511.80px;top:64.37px;font:12.5px/12.5px 'Liberation Sans', sans-serif;color:#7a7488;white-space:pre;transform:scaleX(0.8644);transform-origin:0 0;">F</div>
<div style="left:1539.00px;top:64.37px;font:12.5px/12.5px 'Liberation Sans', sans-serif;color:#7a7488;white-space:pre;transform:scaleX(0.8197);transform-origin:0 0;">H</div>
<div style="left:1569.00px;top:64.37px;font:12.5px/12.5px 'Liberation Sans', sans-serif;color:#7a7488;white-space:pre;transform:scaleX(1.3682);transform-origin:0 0;">j</div>
<div style="left:1596.40px;top:64.37px;font:12.5px/12.5px 'Liberation Sans', sans-serif;color:#7a7488;white-space:pre;transform:scaleX(0.9115);transform-origin:0 0;">K</div>
<div style="left:1623.60px;top:64.37px;font:12.5px/12.5px 'Liberation Sans', sans-serif;color:#7a7488;white-space:pre;transform:scaleX(0.7865);transform-origin:0 0;">H</div>
<div style="left:1652.30px;top:64.37px;font:12.5px/12.5px 'Liberation Sans', sans-serif;color:#7a7488;white-space:pre;transform:scaleX(0.7336);transform-origin:0 0;">L</div>
<div style="left:1678.50px;top:64.37px;font:12.5px/12.5px 'Liberation Sans', sans-serif;color:#7a7488;white-space:pre;transform:scaleX(0.9668);transform-origin:0 0;">Q</div>
<div style="left:1706.40px;top:64.37px;font:12.5px/12.5px 'Liberation Sans', sans-serif;color:#7a7488;white-space:pre;transform:scaleX(0.8845);transform-origin:0 0;">O</div>
<div style="left:1734.90px;top:64.37px;font:12.5px/12.5px 'Liberation Sans', sans-serif;color:#7a7488;white-space:pre;transform:scaleX(0.9715);transform-origin:0 0;">E</div>
<div style="left:1762.80px;top:64.37px;font:12.5px/12.5px 'Liberation Sans', sans-serif;color:#7a7488;white-space:pre;transform:scaleX(0.9154);transform-origin:0 0;">G</div>
<div style="left:1790.80px;top:64.37px;font:12.5px/12.5px 'Liberation Sans', sans-serif;color:#7a7488;white-space:pre;transform:scaleX(1.0674);transform-origin:0 0;">A</div>
<div style="left:1818.70px;top:64.37px;font:12.5px/12.5px 'Liberation Sans', sans-serif;color:#7a7488;white-space:pre;transform:scaleX(1.1634);transform-origin:0 0;">V</div>
<div style="left:1846.70px;top:64.37px;font:12.5px/12.5px 'Liberation Sans', sans-serif;color:#7a7488;white-space:pre;transform:scaleX(1.0914);transform-origin:0 0;">A</div>
<div style="left:1873.30px;top:64.37px;font:12.5px/12.5px 'Liberation Sans', sans-serif;color:#7a7488;white-space:pre;transform:scaleX(0.9748);transform-origin:0 0;">W</div>
<div style="left:1903.00px;top:64.37px;font:12.5px/12.5px 'Liberation Sans', sans-serif;color:#7a7488;white-space:pre;transform:scaleX(1.0074);transform-origin:0 0;">B</div>
<div style="left:963.4px;top:83.5px;width:69.80000000000007px;height:72px;box-sizing:border-box;border:1px solid #8c8c8c;border-radius:5px;background:linear-gradient(180deg,#f6f6f6,#e2e2e2);overflow:hidden"><div style="left:0;top:58px;width:69.80000000000007px;height:14px;background:linear-gradient(180deg,#2a2a2a,#111)"></div></div>
<div style="left:976.00px;top:143.89px;font:10px/10px 'Liberation Sans', sans-serif;color:#fff;white-space:pre;">Domain</div>
<svg style="left:1024px;top:145px;width:8px;height:8px" viewBox="0 0 8 8"><path d="M4 0 V8 M0 4 H8" stroke="#8a8a8a" stroke-width="1.6"/><path d="M1.5 5 L4 8 L6.5 5" fill="#8a8a8a"/></svg>
<div style="left:1037.8px;top:83.5px;width:31.600000000000136px;height:72px;box-sizing:border-box;border:1px solid #8c8c8c;border-radius:5px;background:linear-gradient(180deg,#f6f6f6,#e2e2e2);overflow:hidden"><div style="left:0;top:58px;width:31.600000000000136px;height:14px;background:linear-gradient(180deg,#2a2a2a,#111)"></div></div>
<div style="left:1039.20px;top:143.89px;font:10px/10px 'Liberation Sans', sans-serif;color:#fff;white-space:pre;transform:scaleX(0.9845);transform-origin:0 0;">Matrix</div>
<div style="left:1073.4px;top:83.5px;width:32.19999999999982px;height:72px;box-sizing:border-box;border:1px solid #8c8c8c;border-radius:5px;background:linear-gradient(180deg,#f6f6f6,#e2e2e2);overflow:hidden"><div style="left:0;top:58px;width:32.19999999999982px;height:14px;background:linear-gradient(180deg,#2a2a2a,#111)"></div></div>
<div style="left:1076.20px;top:143.89px;font:10px/10px 'Liberation Sans', sans-serif;color:#fff;white-space:pre;">Noise</div>
<div style="left:1109.8px;top:83.5px;width:135.60000000000014px;height:72px;box-sizing:border-box;border:1px solid #8c8c8c;border-radius:5px;background:linear-gradient(180deg,#f6f6f6,#e2e2e2);overflow:hidden"><div style="left:0;top:58px;width:135.60000000000014px;height:14px;background:linear-gradient(180deg,#2a2a2a,#111)"></div></div>
<div style="left:1149.30px;top:143.89px;font:10px/10px 'Liberation Sans', sans-serif;color:#fff;white-space:pre;transform:scaleX(1.0255);transform-origin:0 0;">Operators</div>
<svg style="left:1236px;top:145px;width:8px;height:8px" viewBox="0 0 8 8"><path d="M4 0 V8 M0 4 H8" stroke="#8a8a8a" stroke-width="1.6"/><path d="M1.5 5 L4 8 L6.5 5" fill="#8a8a8a"/></svg>
<div style="left:1249.9px;top:83.5px;width:69.69999999999982px;height:72px;box-sizing:border-box;border:1px solid #8c8c8c;border-radius:5px;background:linear-gradient(180deg,#f6f6f6,#e2e2e2);overflow:hidden"><div style="left:0;top:58px;width:69.69999999999982px;height:14px;background:linear-gradient(180deg,#2a2a2a,#111)"></div></div>
<div style="left:1257.00px;top:143.89px;font:10px/10px 'Liberation Sans', sans-serif;color:#fff;white-space:pre;transform:scaleX(1.0202);transform-origin:0 0;">Polynomials</div>
<div style="left:1323.5px;top:83.5px;width:97.5px;height:72px;box-sizing:border-box;border:1px solid #8c8c8c;border-radius:5px;background:linear-gradient(180deg,#f6f6f6,#e2e2e2);overflow:hidden"><div style="left:0;top:58px;width:97.5px;height:14px;background:linear-gradient(180deg,#2a2a2a,#111)"></div></div>
<div style="left:1353.60px;top:143.89px;font:10px/10px 'Liberation Sans', sans-serif;color:#fff;white-space:pre;transform:scaleX(1.0406);transform-origin:0 0;">Script</div>
<svg style="left:1413px;top:145px;width:8px;height:8px" viewBox="0 0 8 8"><path d="M4 0 V8 M0 4 H8" stroke="#8a8a8a" stroke-width="1.6"/><path d="M1.5 5 L4 8 L6.5 5" fill="#8a8a8a"/></svg>
<div style="left:1425.5px;top:83.5px;width:31.90000000000009px;height:72px;box-sizing:border-box;border:1px solid #8c8c8c;border-radius:5px;background:linear-gradient(180deg,#f6f6f6,#e2e2e2);overflow:hidden"><div style="left:0;top:58px;width:31.90000000000009px;height:14px;background:linear-gradient(180deg,#2a2a2a,#111)"></div></div>
<div style="left:1431.00px;top:143.89px;font:10px/10px 'Liberation Sans', sans-serif;color:#fff;white-space:pre;transform:scaleX(0.9427);transform-origin:0 0;">Time</div>
<div style="left:1461.8px;top:83.5px;width:69.79999999999995px;height:72px;box-sizing:border-box;border:1px solid #8c8c8c;border-radius:5px;background:linear-gradient(180deg,#f6f6f6,#e2e2e2);overflow:hidden"><div style="left:0;top:58px;width:69.79999999999995px;height:14px;background:linear-gradient(180deg,#2a2a2a,#111)"></div></div>
<div style="left:1483.40px;top:143.89px;font:10px/10px 'Liberation Sans', sans-serif;color:#fff;white-space:pre;transform:scaleX(0.9317);transform-origin:0 0;">Trig</div>
<svg style="left:1522px;top:145px;width:8px;height:8px" viewBox="0 0 8 8"><path d="M4 0 V8 M0 4 H8" stroke="#8a8a8a" stroke-width="1.6"/><path d="M1.5 5 L4 8 L6.5 5" fill="#8a8a8a"/></svg>
<div style="left:1535.3px;top:83.5px;width:32.40000000000009px;height:72px;box-sizing:border-box;border:1px solid #8c8c8c;border-radius:5px;background:linear-gradient(180deg,#f6f6f6,#e2e2e2);overflow:hidden"><div style="left:0;top:58px;width:32.40000000000009px;height:14px;background:linear-gradient(180deg,#2a2a2a,#111)"></div></div>
<div style="left:1543.80px;top:143.89px;font:10px/10px 'Liberation Sans', sans-serif;color:#fff;white-space:pre;">Util</div>
<div style="left:997.6px;top:88px;width:1px;height:51px;background:linear-gradient(180deg,rgba(200,200,200,0),#c8c8c8 30%,#c8c8c8 70%,rgba(200,200,200,0));"></div>
<div style="left:1171.8px;top:88px;width:1px;height:51px;background:linear-gradient(180deg,rgba(200,200,200,0),#c8c8c8 30%,#c8c8c8 70%,rgba(200,200,200,0));"></div>
<div style="left:1210px;top:88px;width:1px;height:51px;background:linear-gradient(180deg,rgba(200,200,200,0),#c8c8c8 30%,#c8c8c8 70%,rgba(200,200,200,0));"></div>
<div style="left:1283.6px;top:88px;width:1px;height:51px;background:linear-gradient(180deg,rgba(200,200,200,0),#c8c8c8 30%,#c8c8c8 70%,rgba(200,200,200,0));"></div>
<div style="left:1357.2px;top:88px;width:1px;height:51px;background:linear-gradient(180deg,rgba(200,200,200,0),#c8c8c8 30%,#c8c8c8 70%,rgba(200,200,200,0));"></div>
<div style="left:1495.5px;top:88px;width:1px;height:51px;background:linear-gradient(180deg,rgba(200,200,200,0),#c8c8c8 30%,#c8c8c8 70%,rgba(200,200,200,0));"></div>
<svg style="left:961px;top:82px;width:620px;height:62px" viewBox="961 82 620 62"><defs><linearGradient id="kg" x1="0" y1="0" x2="1" y2="1"><stop offset="0" stop-color="#d4d4d4"/><stop offset="1" stop-color="#f8f8f8"/></linearGradient><linearGradient id="mg" x1="0" y1="0" x2="1" y2="1"><stop offset="0" stop-color="#b0f040"/><stop offset="1" stop-color="#3a9a10"/></linearGradient><linearGradient id="bg1" x1="0" y1="0" x2="1" y2="0"><stop offset="0" stop-color="#f8a800"/><stop offset="0.45" stop-color="#f03a00"/><stop offset="1" stop-color="#f8a800"/></linearGradient><linearGradient id="tr1" x1="0" y1="1" x2="1" y2="0"><stop offset="0" stop-color="#c02000"/><stop offset="1" stop-color="#f8a020"/></linearGradient><linearGradient id="tr2" x1="0" y1="1" x2="1" y2="0"><stop offset="0" stop-color="#208000"/><stop offset="1" stop-color="#a0e040"/></linearGradient><linearGradient id="py1" x1="0" y1="0" x2="1" y2="1"><stop offset="0" stop-color="#6aa0f8"/><stop offset="1" stop-color="#1a50c0"/></linearGradient><linearGradient id="py2" x1="0" y1="0" x2="1" y2="1"><stop offset="0" stop-color="#ffd040"/><stop offset="1" stop-color="#e08a00"/></linearGradient><radialGradient id="clk" cx="0.5" cy="0.4" r="0.6"><stop offset="0" stop-color="#f8f8f8"/><stop offset="1" stop-color="#c8c8c8"/></radialGradient></defs><g fill="#111" font-family="Liberation Sans" font-size="10.5"><text x="969.5" y="99">0</text><text x="978.5" y="99">1</text><text x="969.5" y="136.5">0</text><text x="978.5" y="136.5">1</text></g><path d="M972.5 100 V109.5 M981.5 100 V109.5 M968 107.5 H990 M972.5 115 V125 M981.5 115 V125 M968 117 H990" stroke="#111" stroke-width="1.2"/><path d="M970 104 L972.5 107.5 L975 104 Z M979 104 L981.5 107.5 L984 104 Z M970 121 L972.5 124.5 L975 121 Z M979 121 L981.5 124.5 L984 121 Z" fill="#111"/><rect x="973" y="106" width="8.5" height="3" fill="#10b050"/><rect x="973" y="115.5" width="8.5" height="3" fill="#10b050"/><g fill="#111" font-family="Liberation Sans" font-weight="bold"><text x="1005" y="95" font-size="7.5">min</text><text x="1013.5" y="100" font-size="6.5">MAX</text></g><path d="M1007 96 V107 M1024.5 100.5 V107 M1004.5 107.5 H1028 M1006.5 105 V110 M1025 105 V110" stroke="#444" stroke-width="1"/><path d="M1005.5 103.5 L1007 106 L1008.5 103.5 Z M1023 103.5 L1024.5 106 L1026 103.5 Z" fill="#555"/><rect x="1007" y="106" width="17.5" height="3" fill="#10a8a0"/><rect x="1007" y="117" width="20" height="5" fill="#111"/><path d="M1008.5 118.3 H1011 V120.7 H1008.5 Z M1014.5 118.3 H1017 V120.7 H1014.5 Z M1020.5 118.3 H1023 V120.7 H1020.5 Z" fill="#fff"/><path d="M1007 122 H1027 Q1024 127 1019.5 129 V132 H1014.5 V129 Q1010 127 1007 122 Z" fill="#10b070"/><rect x="1007" y="132" width="21" height="5" fill="#111"/><path d="M1009 133 V136 M1011 133 V136 M1013 133 V136 M1015 133 V136 M1017 133 V136 M1019 133 V136 M1021 133 V136 M1023 133 V136 M1025 133 V136" stroke="#fff" stroke-width="0.8"/><rect x="1043" y="89" width="19.5" height="19.5" fill="url(#mg)" stroke="#1d4a00" stroke-width="1"/><path d="M1049.5 89 V108.5 M1056 89 V108.5 M1043 95.5 H1062.5 M1043 102 H1062.5" stroke="#1d5a00" stroke-width="0.8"/><rect x="1044.5" y="117.5" width="18" height="18" fill="#f0f0f0" stroke="#111" stroke-width="1.1"/><path d="M1050.5 117.5 V135.5 M1056.5 117.5 V135.5 M1044.5 123.5 H1062.5 M1044.5 129.5 H1062.5" stroke="#888" stroke-width="0.8"/><path d="M1044.5 124 A1.8 2.2 0 0 0 1044.5 129" fill="#fff" stroke="#111" stroke-width="0.8"/><path d="M1079 91.5 H1100 M1079 105.5 H1100" stroke="#e83030" stroke-width="1"/><path d="M1081.5 91 V110 M1097 97 V110" stroke="#333" stroke-width="0.9"/><path d="M1081.5 92 Q1084 104 1086 96 T1090 99 T1094 104 T1097 97" stroke="#444" stroke-width="0.9" fill="none"/><rect x="1080.3" y="90.5" width="2.4" height="2.4" fill="#fff" stroke="#222" stroke-width="0.8"/><circle cx="1097" cy="98" r="1.3" fill="#fff" stroke="#222" stroke-width="0.8"/><path d="M1081 119 Q1084 115 1090 117 Q1097 116 1099 120 Q1100 128 1097 135 Q1091 140 1085 137 Q1079 133 1080 126 Z" fill="#f4dc20"/><path d="M1083 118 Q1090 115 1097 119 L1094 122 Q1089 120 1084 122 Z" fill="#f08010"/><path d="M1080.5 127 Q1083 124 1086 127 Q1085 131 1081 130 Z" fill="#3a80e0"/><circle cx="1091" cy="131" r="2.3" fill="#3a80e0"/><circle cx="1097.5" cy="124" r="1.6" fill="#4a90f0"/><circle cx="1088" cy="136" r="1.6" fill="#4a90f0"/><circle cx="1093" cy="125" r="1.2" fill="#90d0f0"/><g transform="translate(1115.5 89.5)"><rect x="1.2" y="1.2" width="17" height="17" rx="2.5" fill="rgba(0,0,0,0.10)"/><rect x="0.6" y="0.6" width="16.6" height="16.6" rx="2.6" fill="url(#kg)" stroke="#4a4a4a" stroke-width="1.1"/><path d="M8.8 4.8 V13 M4.7 8.9 H12.9" stroke="#111" stroke-width="2.3"/></g><g transform="translate(1143.5 89.5)"><rect x="1.2" y="1.2" width="17" height="17" rx="2.5" fill="rgba(0,0,0,0.10)"/><rect x="0.6" y="0.6" width="16.6" height="16.6" rx="2.6" fill="url(#kg)" stroke="#4a4a4a" stroke-width="1.1"/><path d="M5.2 5.2 L12.6 12.6 M12.6 5.2 L5.2 12.6" stroke="#111" stroke-width="2.3"/></g><g transform="translate(1219.5 89.5)"><rect x="1.2" y="1.2" width="17" height="17" rx="2.5" fill="rgba(0,0,0,0.10)"/><rect x="0.6" y="0.6" width="16.6" height="16.6" rx="2.6" fill="url(#kg)" stroke="#4a4a4a" stroke-width="1.1"/><path d="M5 5.3 L12.8 8.9 L5 12.5" stroke="#111" stroke-width="2.4" fill="none" stroke-linejoin="miter"/></g><g transform="translate(1115.5 117.5)"><rect x="1.2" y="1.2" width="17" height="17" rx="2.5" fill="rgba(0,0,0,0.10)"/><rect x="0.6" y="0.6" width="16.6" height="16.6" rx="2.6" fill="url(#kg)" stroke="#4a4a4a" stroke-width="1.1"/><path d="M2 8 V4.5 Q2 2.5 3.5 2.5 Q5 2.5 5 4.5 V8 M2 5.6 H5" stroke="#111" stroke-width="1" fill="none"/><path d="M11 9.5 H12.8 Q14 9.5 14 10.8 Q14 12 12.8 12 H11 Z M11 12 H13 Q14.3 12 14.3 13.5 Q14.3 15 13 15 H11 Z" stroke="#111" stroke-width="1" fill="none"/><path d="M4.5 15.5 L12 2.5" stroke="#111" stroke-width="1.6"/></g><g transform="translate(1143.5 117.5)"><rect x="1.2" y="1.2" width="17" height="17" rx="2.5" fill="rgba(0,0,0,0.10)"/><rect x="0.6" y="0.6" width="16.6" height="16.6" rx="2.6" fill="url(#kg)" stroke="#4a4a4a" stroke-width="1.1"/><path d="M6 9.3 H11.8" stroke="#111" stroke-width="2.3"/></g><g transform="translate(1219.5 117.5)"><rect x="1.2" y="1.2" width="17" height="17" rx="2.5" fill="rgba(0,0,0,0.10)"/><rect x="0.6" y="0.6" width="16.6" height="16.6" rx="2.6" fill="url(#kg)" stroke="#4a4a4a" stroke-width="1.1"/><path d="M12.5 5.3 L4.7 8.9 L12.5 12.5" stroke="#111" stroke-width="2.4" fill="none"/></g><path d="M1181.8999999999999 103.1 H1190.7 M1186.3 98.69999999999999 V107.5" stroke="#111" stroke-width="3"/><path d="M1185.1000000000001 94.8 H1190.7 M1187.9 92.0 V97.6" stroke="#222" stroke-width="1.9"/><path d="M1195.2 91.9 H1200.8 M1198 89.10000000000001 V94.7" stroke="#222" stroke-width="1.9"/><path d="M1191.2 100.1 H1196.8 M1194 97.3 V102.89999999999999" stroke="#222" stroke-width="1.9"/><path d="M1195.2 105.1 H1200.8 M1198 102.3 V107.89999999999999" stroke="#222" stroke-width="1.9"/><path d="M1182.1 90.2 H1184.9 M1183.5 88.8 V91.60000000000001" stroke="#555" stroke-width="1"/><path d="M1189.1 90.2 H1191.9 M1190.5 88.8 V91.60000000000001" stroke="#555" stroke-width="1"/><path d="M1192.1 93.3 H1194.9 M1193.5 91.89999999999999 V94.7" stroke="#555" stroke-width="1"/><path d="M1182.1 97.4 H1184.9 M1183.5 96.0 V98.80000000000001" stroke="#555" stroke-width="1"/><path d="M1196.1 97.4 H1198.9 M1197.5 96.0 V98.80000000000001" stroke="#555" stroke-width="1"/><path d="M1198.1 100.3 H1200.9 M1199.5 98.89999999999999 V101.7" stroke="#555" stroke-width="1"/><path d="M1191.1 106.6 H1193.9 M1192.5 105.19999999999999 V108.0" stroke="#555" stroke-width="1"/><path d="M1181.0 107.7 H1183.8000000000002 M1182.4 106.3 V109.10000000000001" stroke="#555" stroke-width="1"/><path d="M1183.5 125.3 L1189.4 119.3 H1198.5 V128.5 L1192.3 134.3 H1183.5" stroke="#111" stroke-width="1.1" fill="none"/><g fill="#fff" stroke="#111" stroke-width="1.1"><circle cx="1189.4" cy="119.3" r="1.9"/><circle cx="1198.5" cy="119.3" r="1.9"/><circle cx="1183.5" cy="125.3" r="1.9"/><circle cx="1198.5" cy="128.5" r="1.9"/><circle cx="1183.5" cy="134.3" r="1.9"/><circle cx="1192.3" cy="134.3" r="1.9"/></g><path d="M1194.5 117.8 L1192.8 119.3 L1194.5 120.8 M1197 124.5 L1198.5 122.8 L1200 124.5 M1187 132.8 L1188.7 134.3 L1187 135.8 M1186 121.5 L1186.3 123.5 L1188.3 123" stroke="#111" stroke-width="0.9" fill="none"/><g transform="translate(1255.5 89.5)"><rect x="1.2" y="1.2" width="17" height="17" rx="2.5" fill="rgba(0,0,0,0.10)"/><rect x="0.6" y="0.6" width="16.6" height="16.6" rx="2.6" fill="url(#kg)" stroke="#4a4a4a" stroke-width="1.1"/><text x="2" y="15.3" font-family="Liberation Serif" font-weight="bold" font-size="13" fill="#111">A</text><text x="10.8" y="8.3" font-family="Liberation Sans" font-size="7.5" fill="#111">2</text></g><g transform="translate(1293.5 89.5)"><rect x="1.2" y="1.2" width="17" height="17" rx="2.5" fill="rgba(0,0,0,0.10)"/><rect x="0.6" y="0.6" width="16.6" height="16.6" rx="2.6" fill="url(#kg)" stroke="#4a4a4a" stroke-width="1.1"/><text x="1.3" y="15.5" font-family="Liberation Serif" font-weight="bold" font-size="12" fill="#111" textLength="11" lengthAdjust="spacingAndGlyphs">10</text><text x="11.5" y="7.5" font-family="Liberation Sans" font-size="6.5" fill="#111">A</text></g><g transform="translate(1255.5 117.5)"><rect x="1.2" y="1.2" width="17" height="17" rx="2.5" fill="rgba(0,0,0,0.10)"/><rect x="0.6" y="0.6" width="16.6" height="16.6" rx="2.6" fill="url(#kg)" stroke="#4a4a4a" stroke-width="1.1"/><path d="M3.5 9.7 L4.8 9 L6.7 13.8 L10.3 3.4 H14.2" stroke="#111" stroke-width="1.1" fill="none"/></g><g transform="translate(1293.5 117.5)"><rect x="1.2" y="1.2" width="17" height="17" rx="2.5" fill="rgba(0,0,0,0.10)"/><rect x="0.6" y="0.6" width="16.6" height="16.6" rx="2.6" fill="url(#kg)" stroke="#4a4a4a" stroke-width="1.1"/><text x="2.5" y="15" font-family="Liberation Serif" font-weight="bold" font-size="13" fill="#111">2</text><text x="11.3" y="8" font-family="Liberation Sans" font-size="6.5" fill="#111">A</text></g><text x="1327.5" y="105" font-family="Liberation Serif" font-style="italic" font-size="20" fill="#111">f</text><text x="1337" y="107" font-family="Liberation Serif" font-style="italic" font-size="15" fill="#111">x</text><rect x="1342.8" y="89.3" width="5.8" height="5.8" fill="#fff" stroke="#111" stroke-width="1"/><circle cx="1345.7" cy="92.2" r="1" fill="#111"/><text x="1328.5" y="133" font-family="Liberation Serif" font-style="italic" font-size="15" fill="#111">x</text><path d="M1338 119.5 H1342 M1340 119.5 V135.5 M1338 135.5 H1342" stroke="#111" stroke-width="0.9"/><text x="1343.5" y="126" font-family="Liberation Sans" font-size="9" fill="#111">2</text><text x="1366" y="100.5" font-family="Liberation Sans" font-weight="bold" font-size="15" fill="#a00000">C</text><text x="1374.5" y="109" font-family="Liberation Sans" font-weight="bold" font-size="12" fill="#e00000">#</text><text x="1395" y="102" font-family="Liberation Sans" font-weight="bold" font-size="15" fill="#000080">V</text><text x="1403.5" y="108.5" font-family="Liberation Sans" font-weight="bold" font-style="italic" font-size="12" fill="#1a48c8">B</text><path d="M1356 116 Q1356 115 1357 115 H1361 Q1362 115 1362 116" fill="none"/><path d="M1374 115.5 Q1371 115.5 1371 118 V121 H1367 Q1365 121 1365 124 V129 Q1365 132 1367 132 H1371 V128 Q1371 126 1373 126 H1381 Q1383 126 1383 124 V118 Q1383 115.5 1380 115.5 Z" fill="url(#py1)" stroke="#0a1a60" stroke-width="0.9"/><path d="M1378 138.5 Q1381 138.5 1381 136 V133 H1385 Q1388 133 1388 130 V125 Q1388 122 1385 122 H1381 V126 Q1381 128 1379 128 H1371 Q1369 128 1369 130 V136 Q1369 138.5 1372 138.5 Z" fill="url(#py2)" stroke="#6a2a00" stroke-width="0.9"/><circle cx="1374.5" cy="118.5" r="1" fill="#0a1a60"/><circle cx="1379.5" cy="135.5" r="1" fill="#6a2a00"/><rect x="1429" y="87.2" width="23.8" height="23.4" fill="#e8e8e8" stroke="#222" stroke-width="1.1"/><rect x="1429.5" y="87.7" width="22.8" height="8.3" fill="#f01010"/><text x="1432" y="95.3" font-family="Liberation Sans" font-weight="bold" font-size="8" fill="#fff" textLength="17" lengthAdjust="spacingAndGlyphs">NOV</text><text x="1432.5" y="108.5" font-family="Liberation Sans" font-weight="bold" font-size="13.5" fill="#111" textLength="15.5" lengthAdjust="spacingAndGlyphs">16</text><circle cx="1441" cy="127" r="10.8" fill="url(#clk)" stroke="#333" stroke-width="1.1"/><path d="M1440.5 126.8 L1445 122.5 M1440.5 126.8 L1446.5 132.5" stroke="#111" stroke-width="1.8"/><circle cx="1440.5" cy="126.8" r="1.6" fill="#111"/><g fill="#999"><circle cx="1441" cy="118.5" r="0.7"/><circle cx="1441" cy="135.5" r="0.7"/><circle cx="1432.5" cy="127" r="0.7"/><circle cx="1449.5" cy="127" r="0.7"/></g><path d="M1467 89 Q1486 90 1487 109 H1467 Z" fill="#fde4e4" stroke="#8a1010" stroke-width="0.9"/><path d="M1467 89 V109 H1487" stroke="#6a0000" stroke-width="1" stroke-dasharray="1.3 1.2" fill="none"/><path d="M1467.5 108.5 L1480 97 V108.5 Z" fill="url(#tr1)"/><path d="M1467.5 108.5 L1485 91" stroke="#111" stroke-width="1.5"/><path d="M1481 89.5 L1486.5 89 L1486 94.5 Z" fill="#111"/><path d="M1467 117 Q1486 118 1487 137 H1467 Z" fill="#eafcd0" stroke="#1a6a00" stroke-width="0.9"/><path d="M1467 117 V137 H1487" stroke="#0a5a00" stroke-width="1" stroke-dasharray="1.3 1.2" fill="none"/><path d="M1467.5 136.5 L1480 125.5 H1467.5 Z" fill="url(#tr2)"/><path d="M1467.5 136.5 L1485 119" stroke="#111" stroke-width="1.5"/><path d="M1481 117.5 L1486.5 117 L1486 122.5 Z" fill="#111"/><g transform="translate(1505.5 89.5)"><rect x="1.2" y="1.2" width="17" height="17" rx="2.5" fill="rgba(0,0,0,0.10)"/><rect x="0.6" y="0.6" width="16.6" height="16.6" rx="2.6" fill="url(#kg)" stroke="#4a4a4a" stroke-width="1.1"/><text x="2.3" y="14.5" font-family="Liberation Serif" font-size="14" fill="#111">α</text><circle cx="14" cy="4.3" r="1.5" fill="none" stroke="#111" stroke-width="0.8"/></g><g transform="translate(1505.5 117.5)"><rect x="1.2" y="1.2" width="17" height="17" rx="2.5" fill="rgba(0,0,0,0.10)"/><rect x="0.6" y="0.6" width="16.6" height="16.6" rx="2.6" fill="url(#kg)" stroke="#4a4a4a" stroke-width="1.1"/><text x="3.5" y="15" font-family="Liberation Serif" font-style="italic" font-weight="bold" font-size="14" fill="#111">r</text><text x="11.5" y="7.5" font-family="Liberation Sans" font-size="6.5" fill="#111">c</text></g><path d="M1541 106 Q1544 104 1545.5 97 Q1547 90 1549.5 90.3 Q1552 90.6 1554 98 Q1556 103 1561 105 V107 H1541 Z" fill="url(#bg1)" stroke="#111" stroke-width="0.9"/><path d="M1540.5 107.2 H1561.5" stroke="#111" stroke-width="1.3"/><path d="M1549.5 91 V106" stroke="#111" stroke-width="0.9" stroke-dasharray="1 1"/><path d="M1542 134 Q1545 133 1547 129 Q1549 124 1551 121 Q1553 118.5 1536.5 119" stroke="none" fill="none"/><path d="M1541.5 134.5 L1544.5 132.5 L1546.5 129.5 L1548 126.5 L1549.5 123.5 L1551.5 121 L1554 119.5" stroke="#111" stroke-width="2" stroke-dasharray="1.8 1.2" fill="none"/><circle cx="1543.3" cy="134.5" r="1.9" fill="#fff" stroke="#8a1010" stroke-width="1.1"/><circle cx="1558.5" cy="119.5" r="1.9" fill="#fff" stroke="#8a1010" stroke-width="1.1"/></svg>
<div style="left:961.5px;top:167px;width:955.5px;height:2px;background:#6a6a6a;"></div>
<div style="left:961.5px;top:169px;width:955.5px;height:31px;background:linear-gradient(180deg,#fdfdfd,#f2f2f2);"></div>
<div style="left:961.5px;top:200px;width:955.5px;height:807px;background:#d4d0c8;"></div>
<svg style="left:0;top:0;width:1917px;height:1061px" viewBox="0 0 1917 1061"><path d="M1058.3 200 V1007 M1166.6 200 V1007 M1275.0 200 V1007 M1383.3 200 V1007 M1491.6 200 V1007 M1599.9 200 V1007 M1708.3 200 V1007 M1816.6 200 V1007 M961.5 236.3 H1917 M961.5 272.4 H1917 M961.5 308.5 H1917 M961.5 344.6 H1917 M961.5 380.7 H1917 M961.5 416.8 H1917 M961.5 452.9 H1917 M961.5 489.0 H1917 M961.5 525.1 H1917 M961.5 561.2 H1917 M961.5 597.3 H1917 M961.5 633.4 H1917 M961.5 669.5 H1917 M961.5 705.6 H1917 M961.5 741.7 H1917 M961.5 777.8 H1917 M961.5 813.9 H1917 M961.5 850.0 H1917 M961.5 886.1 H1917 M961.5 922.2 H1917 M961.5 958.3 H1917 M961.5 994.4 H1917" stroke="#b4b0a8" stroke-width="1" fill="none"/></svg>
<svg style="left:0;top:0;width:0;height:0"><defs><linearGradient id="fg" x1="0" y1="0" x2="0" y2="1"><stop offset="0" stop-color="#f4f4f4"/><stop offset="1" stop-color="#c4c4c4"/></linearGradient><linearGradient id="lg" x1="0" y1="0" x2="0" y2="1"><stop offset="0" stop-color="#fafafa"/><stop offset="1" stop-color="#e4e4e4"/></linearGradient></defs></svg>
<div style="left:1032.3px;top:470.9px;width:832.4px;height:114.8px;background:rgba(170,130,255,0.62);box-shadow:inset 0 0 0 1px rgba(120,90,170,0.35)"></div>
<div style="left:1031.2px;top:597.7px;width:834.7px;height:116.9px;background:rgba(170,130,255,0.62);box-shadow:inset 0 0 0 1px rgba(120,90,170,0.35)"></div>
<svg style="left:0;top:0;width:1917px;height:1061px" viewBox="0 0 1917 1061"><path d="M961 442 C1000 458 1020 478 1039 486.5" stroke="rgba(90,80,100,0.45)" stroke-width="0.9" fill="none"/><path d="M961 509.5 C1020 518 1060 521 1106 520.7" stroke="rgba(90,80,100,0.45)" stroke-width="0.9" fill="none"/><path d="M961 578 C1000 594 1020 608 1038 614" stroke="rgba(90,80,100,0.45)" stroke-width="0.9" fill="none"/><path d="M961 641.8 C1020 650 1060 655 1102 654.3" stroke="rgba(90,80,100,0.45)" stroke-width="0.9" fill="none"/><path d="M1100 494 C1140 497 1160 501 1169 501" stroke="rgba(90,80,100,0.45)" stroke-width="0.9" fill="none"/><path d="M1216 512 C1225 510 1228 505 1232 504.8" stroke="rgba(90,80,100,0.45)" stroke-width="0.9" fill="none"/><path d="M1100 622 C1140 625 1160 628 1168 628" stroke="rgba(90,80,100,0.45)" stroke-width="0.9" fill="none"/><path d="M1216 639 C1225 636 1228 634 1231 633.4" stroke="rgba(90,80,100,0.45)" stroke-width="0.9" fill="none"/></svg>
<svg style="left:1397.5px;top:453.2px;width:102.79999999999995px;height:19.30000000000001px" viewBox="1397.5 453.2 102.79999999999995 19.30000000000001"><path d="M1398.5 454.2 H1498.3 V466.7 H1452.4 L1448.4 470.5 L1444.4 466.7 H1398.5 Z" fill="url(#lg)" stroke="#222" stroke-width="1.1"/><path d="M1400.0 467.5 H1444.4" stroke="rgba(0,0,0,0.25)" stroke-width="1"/></svg>
<div style="left:1401.50px;top:456.53px;font:8.2px/8.2px 'Liberation Sans', sans-serif;color:#1a1a1a;white-space:pre;transform:scaleX(0.8697);transform-origin:0 0;">FILLED CASE COUNT AREA</div>
<svg style="left:1394px;top:580.5px;width:109.40000000000009px;height:19.0px" viewBox="1394 580.5 109.40000000000009 19.0"><path d="M1395 581.5 H1501.4 V593.6 H1452 L1448 597.5 L1444 593.6 H1395 Z" fill="url(#lg)" stroke="#222" stroke-width="1.1"/><path d="M1396.5 594.4 H1444" stroke="rgba(0,0,0,0.25)" stroke-width="1"/></svg>
<div style="left:1398.00px;top:583.83px;font:8.2px/8.2px 'Liberation Sans', sans-serif;color:#1a1a1a;white-space:pre;transform:scaleX(0.8909);transform-origin:0 0;">FILLED DEATH COUNT AREA</div>
<svg style="left:0;top:0;width:1917px;height:1061px" viewBox="0 0 1917 1061"><path d="M1151 486.5 C1160.1 486.5 1160.1 486.5 1169.2 486.5" stroke="#4e4466" stroke-width="3.8" fill="none"/><path d="M1151 486.5 C1160.1 486.5 1160.1 486.5 1169.2 486.5" stroke="#7d6ba3" stroke-width="1.3" fill="none"/><path d="M1150.4 513.4 C1159.8000000000002 513.4 1159.8000000000002 500.9 1169.2 500.9" stroke="#4e4466" stroke-width="2.2" fill="none"/><path d="M1216.6 490.3 C1276.4499999999998 490.3 1276.4499999999998 489.9 1336.3 489.9" stroke="#4e4466" stroke-width="3.8" fill="none"/><path d="M1216.6 490.3 C1276.4499999999998 490.3 1276.4499999999998 489.9 1336.3 489.9" stroke="#7d6ba3" stroke-width="1.3" fill="none"/><path d="M1322.5 504.8 C1329.4 504.8 1329.4 504.5 1336.3 504.5" stroke="#4e4466" stroke-width="3.8" fill="none"/><path d="M1322.5 504.8 C1329.4 504.8 1329.4 504.5 1336.3 504.5" stroke="#7d6ba3" stroke-width="1.3" fill="none"/><path d="M1400.3 504.5 C1413.25 504.5 1413.25 504.5 1426.2 504.5" stroke="#4e4466" stroke-width="3.8" fill="none"/><path d="M1400.3 504.5 C1413.25 504.5 1413.25 504.5 1426.2 504.5" stroke="#7d6ba3" stroke-width="1.3" fill="none"/><path d="M1472.8 489.9 C1505.9 489.9 1505.9 489.9 1539 489.9" stroke="#4e4466" stroke-width="3.8" fill="none"/><path d="M1472.8 489.9 C1505.9 489.9 1505.9 489.9 1539 489.9" stroke="#7d6ba3" stroke-width="1.3" fill="none"/><path d="M1472.8 504.5 C1505.9 504.5 1505.9 504.5 1539 504.5" stroke="#4e4466" stroke-width="3.8" fill="none"/><path d="M1472.8 504.5 C1505.9 504.5 1505.9 504.5 1539 504.5" stroke="#7d6ba3" stroke-width="1.3" fill="none"/><path d="M1527.3 519.3 C1533.15 519.3 1533.15 519.3 1539 519.3" stroke="#4e4466" stroke-width="2.2" fill="none"/><path d="M1588.1 504.5 C1594.65 504.5 1594.65 504.5 1601.2 504.5" stroke="#4e4466" stroke-width="3.8" fill="none"/><path d="M1588.1 504.5 C1594.65 504.5 1594.65 504.5 1601.2 504.5" stroke="#7d6ba3" stroke-width="1.3" fill="none"/><path d="M1649.6 512.2 C1656.3 512.2 1656.3 512.2 1663 512.2" stroke="#4e4466" stroke-width="2.2" fill="none"/><path d="M1708.7 512.2 C1764.3000000000002 512.2 1764.3000000000002 511.5 1819.9 511.5" stroke="#4e4466" stroke-width="2.4" fill="none"/><path d="M1807.7 528 C1813.8000000000002 528 1813.8000000000002 526.4 1819.9 526.4" stroke="#4e4466" stroke-width="2.2" fill="none"/><path d="M1157.4 613.9 C1162.8000000000002 613.9 1162.8000000000002 613.5 1168.2 613.5" stroke="#4e4466" stroke-width="3.8" fill="none"/><path d="M1157.4 613.9 C1162.8000000000002 613.9 1162.8000000000002 613.5 1168.2 613.5" stroke="#7d6ba3" stroke-width="1.3" fill="none"/><path d="M1146.8 647 C1157.5 647 1157.5 628 1168.2 628" stroke="#4e4466" stroke-width="2.2" fill="none"/><path d="M1216 617.2 C1276.65 617.2 1276.65 618.5 1337.3 618.5" stroke="#4e4466" stroke-width="3.8" fill="none"/><path d="M1216 617.2 C1276.65 617.2 1276.65 618.5 1337.3 618.5" stroke="#7d6ba3" stroke-width="1.3" fill="none"/><path d="M1320.6 633.4 C1328.9499999999998 633.4 1328.9499999999998 633.1 1337.3 633.1" stroke="#4e4466" stroke-width="3.8" fill="none"/><path d="M1320.6 633.4 C1328.9499999999998 633.4 1328.9499999999998 633.1 1337.3 633.1" stroke="#7d6ba3" stroke-width="1.3" fill="none"/><path d="M1400.7 633.1 C1413.5500000000002 633.1 1413.5500000000002 633.1 1426.4 633.1" stroke="#4e4466" stroke-width="3.8" fill="none"/><path d="M1400.7 633.1 C1413.5500000000002 633.1 1413.5500000000002 633.1 1426.4 633.1" stroke="#7d6ba3" stroke-width="1.3" fill="none"/><path d="M1473.4 618.5 C1506.4 618.5 1506.4 618.5 1539.4 618.5" stroke="#4e4466" stroke-width="3.8" fill="none"/><path d="M1473.4 618.5 C1506.4 618.5 1506.4 618.5 1539.4 618.5" stroke="#7d6ba3" stroke-width="1.3" fill="none"/><path d="M1473.4 633.1 C1506.4 633.1 1506.4 633.1 1539.4 633.1" stroke="#4e4466" stroke-width="3.8" fill="none"/><path d="M1473.4 633.1 C1506.4 633.1 1506.4 633.1 1539.4 633.1" stroke="#7d6ba3" stroke-width="1.3" fill="none"/><path d="M1523.6 648.7 C1531.5 648.7 1531.5 647.6 1539.4 647.6" stroke="#4e4466" stroke-width="2.2" fill="none"/><path d="M1588.8 633.1 C1595.1999999999998 633.1 1595.1999999999998 633.1 1601.6 633.1" stroke="#4e4466" stroke-width="3.8" fill="none"/><path d="M1588.8 633.1 C1595.1999999999998 633.1 1595.1999999999998 633.1 1601.6 633.1" stroke="#7d6ba3" stroke-width="1.3" fill="none"/><path d="M1650.4 640.9 C1656.85 640.9 1656.85 641.3 1663.3 641.3" stroke="#4e4466" stroke-width="2.2" fill="none"/><path d="M1709.4 641.3 C1764.5500000000002 641.3 1764.5500000000002 640.2 1819.7 640.2" stroke="#4e4466" stroke-width="2.4" fill="none"/><path d="M1809.9 655 C1814.8000000000002 655 1814.8000000000002 654.3 1819.7 654.3" stroke="#4e4466" stroke-width="2.2" fill="none"/><path d="M1805.4 681 C1812.5500000000002 681 1812.5500000000002 669 1819.7 669" stroke="#4e4466" stroke-width="2.2" fill="none"/></svg>
<svg style="left:1029px;top:477.8px;width:18px;height:18px" viewBox="0 0 18 18"><g fill="none" stroke="rgba(120,100,150,0.35)" stroke-width="0.6"><circle cx="9" cy="9" r="3.5"/><circle cx="9" cy="9" r="5.5"/><circle cx="9" cy="9" r="7.5"/></g></svg>
<div style="left:1039.5px;top:479.4px;width:111.3px;height:14.7px;box-sizing:border-box;border:1.2px solid #2e2e30;border-radius:4px;background:linear-gradient(180deg,#acacb4,#8c8c96);box-shadow:1px 1px 1px rgba(0,0,0,0.18)"></div>
<div style="left:1044.00px;top:482.78px;font:8.2px/8.2px 'Liberation Sans', sans-serif;color:#2a2a2a;white-space:pre;transform:scaleX(0.8739);transform-origin:0 0;">CASE COUNT GRAPH PONTS</div>
<svg style="left:0;top:0;width:1917px;height:1061px" viewBox="0 0 1917 1061"><path d="M1040.0 483.55 A3.2 3.2 0 0 0 1040.0 489.95" fill="#f8f8f8" stroke="#222" stroke-width="1.2"/><path d="M1150.3 483.55 A3.2 3.2 0 0 1 1150.3 489.95" fill="#f8f8f8" stroke="#222" stroke-width="1.2"/></svg>
<div style="left:1106.3px;top:497.8px;width:44.1px;height:32.8px;box-sizing:border-box;border:1.2px solid #2e2e30;border-radius:3px;background:linear-gradient(180deg,#acacb4,#8c8c96);box-shadow:1px 1px 1px rgba(0,0,0,0.18)"></div>
<div style="left:1119.7px;top:499.2px;width:18.0px;height:30.0px;box-sizing:border-box;border:1px solid #151515;border-radius:3px;background:linear-gradient(180deg,#444,#333)"></div>
<div style="left:1117.03px;top:509.79px;width:23.33px;height:10.5px;transform:rotate(-90deg);transform-origin:50% 50%;"><div style="left:0;top:-1.05px;font:10.5px/10.5px 'Liberation Sans',sans-serif;font-weight:bold;color:#fff;white-space:pre;transform:scaleX(1.0000);transform-origin:0 0">Dom</div></div>
<div style="left:1111.03px;top:501.89px;font:8.5px/8.5px 'Liberation Sans', sans-serif;color:#383838;white-space:pre;">A</div>
<div style="left:1111.03px;top:516.29px;font:8.5px/8.5px 'Liberation Sans', sans-serif;color:#383838;white-space:pre;">B</div>
<div style="left:1140.70px;top:508.99px;font:8.5px/8.5px 'Liberation Sans', sans-serif;color:#383838;white-space:pre;">I</div>
<svg style="left:0;top:0;width:1917px;height:1061px" viewBox="0 0 1917 1061"><path d="M1106.8 503.1 A3.2 3.2 0 0 0 1106.8 509.5" fill="#f8f8f8" stroke="#222" stroke-width="1.2"/><path d="M1106.8 517.5 A3.2 3.2 0 0 0 1106.8 523.9000000000001" fill="#f8f8f8" stroke="#222" stroke-width="1.2"/><path d="M1149.9 510.2 A3.2 3.2 0 0 1 1149.9 516.6" fill="#f8f8f8" stroke="#222" stroke-width="1.2"/></svg>
<div style="left:1169.2px;top:478px;width:47.4px;height:46.7px;box-sizing:border-box;border:1.2px solid #2e2e30;border-radius:3px;background:linear-gradient(180deg,#acacb4,#8c8c96);box-shadow:1px 1px 1px rgba(0,0,0,0.18)"></div>
<div style="left:1184.3px;top:479.4px;width:18.4px;height:43.9px;box-sizing:border-box;border:1px solid #151515;border-radius:3px;background:linear-gradient(180deg,#444,#333)"></div>
<div style="left:1175.41px;top:496.94px;width:36.17px;height:10.5px;transform:rotate(-90deg);transform-origin:50% 50%;"><div style="left:0;top:-1.05px;font:10.5px/10.5px 'Liberation Sans',sans-serif;font-weight:bold;color:#fff;white-space:pre;transform:scaleX(1.0000);transform-origin:0 0">SubSet</div></div>
<div style="left:1176.57px;top:482.09px;font:8.5px/8.5px 'Liberation Sans', sans-serif;color:#383838;white-space:pre;">L</div>
<div style="left:1175.16px;top:496.49px;font:8.5px/8.5px 'Liberation Sans', sans-serif;color:#383838;white-space:pre;">D</div>
<div style="left:1173.28px;top:510.89px;font:8.5px/8.5px 'Liberation Sans', sans-serif;color:#383838;white-space:pre;">W</div>
<div style="left:1205.70px;top:485.89px;font:8.5px/8.5px 'Liberation Sans', sans-serif;color:#383838;white-space:pre;">L</div>
<div style="left:1205.70px;top:507.79px;font:8.5px/8.5px 'Liberation Sans', sans-serif;color:#383838;white-space:pre;">I</div>
<svg style="left:0;top:0;width:1917px;height:1061px" viewBox="0 0 1917 1061"><path d="M1169.7 483.3 A3.2 3.2 0 0 0 1169.7 489.7" fill="#f8f8f8" stroke="#222" stroke-width="1.2"/><path d="M1169.7 497.7 A3.2 3.2 0 0 0 1169.7 504.09999999999997" fill="#f8f8f8" stroke="#222" stroke-width="1.2"/><path d="M1169.7 512.0999999999999 A3.2 3.2 0 0 0 1169.7 518.5" fill="#f8f8f8" stroke="#222" stroke-width="1.2"/><path d="M1216.1 487.1 A3.2 3.2 0 0 1 1216.1 493.5" fill="#f8f8f8" stroke="#222" stroke-width="1.2"/><path d="M1216.1 509.00000000000006 A3.2 3.2 0 0 1 1216.1 515.4000000000001" fill="#f8f8f8" stroke="#222" stroke-width="1.2"/></svg>
<div style="left:1232.4px;top:497.4px;width:90.1px;height:14.8px;box-sizing:border-box;border:1.2px solid #2e2e30;border-radius:4px;background:linear-gradient(180deg,#acacb4,#8c8c96);box-shadow:1px 1px 1px rgba(0,0,0,0.18)"></div>
<div style="left:1237.00px;top:500.83px;font:8.2px/8.2px 'Liberation Sans', sans-serif;color:#2a2a2a;white-space:pre;transform:scaleX(0.8809);transform-origin:0 0;">CURRENT DATE POINT</div>
<svg style="left:0;top:0;width:1917px;height:1061px" viewBox="0 0 1917 1061"><path d="M1232.9 501.6 A3.2 3.2 0 0 0 1232.9 508.0" fill="#f8f8f8" stroke="#222" stroke-width="1.2"/><path d="M1322.0 501.6 A3.2 3.2 0 0 1 1322.0 508.0" fill="#f8f8f8" stroke="#222" stroke-width="1.2"/></svg>
<div style="left:1336.3px;top:481.4px;width:64.0px;height:46.6px;box-sizing:border-box;border:1.2px solid #2e2e30;border-radius:3px;background:linear-gradient(180deg,#acacb4,#8c8c96);box-shadow:1px 1px 1px rgba(0,0,0,0.18)"></div>
<div style="left:1367px;top:482.8px;width:17.7px;height:43.8px;box-sizing:border-box;border:1px solid #151515;border-radius:3px;background:linear-gradient(180deg,#444,#333)"></div>
<div style="left:1360.39px;top:500.29px;width:30.93px;height:10.5px;transform:rotate(-90deg);transform-origin:50% 50%;"><div style="left:0;top:-1.05px;font:10.5px/10.5px 'Liberation Sans',sans-serif;font-weight:bold;color:#fff;white-space:pre;transform:scaleX(1.0000);transform-origin:0 0">Merge</div></div>
<div style="left:1353.13px;top:485.49px;font:8.5px/8.5px 'Liberation Sans', sans-serif;color:#383838;white-space:pre;">D1</div>
<div style="left:1353.13px;top:500.09px;font:8.5px/8.5px 'Liberation Sans', sans-serif;color:#383838;white-space:pre;">D2</div>
<div style="left:1353.13px;top:514.89px;font:8.5px/8.5px 'Liberation Sans', sans-serif;color:#383838;white-space:pre;">D3</div>
<div style="left:1387.70px;top:500.09px;font:8.5px/8.5px 'Liberation Sans', sans-serif;color:#383838;white-space:pre;">R</div>
<svg style="left:0;top:0;width:1917px;height:1061px" viewBox="0 0 1917 1061"><path d="M1336.8 486.7 A3.2 3.2 0 0 0 1336.8 493.09999999999997" fill="#f8f8f8" stroke="#222" stroke-width="1.2"/><path d="M1336.8 501.3 A3.2 3.2 0 0 0 1336.8 507.7" fill="#f8f8f8" stroke="#222" stroke-width="1.2"/><path d="M1336.8 516.0999999999999 A3.2 3.2 0 0 0 1336.8 522.5" fill="#f8f8f8" stroke="#222" stroke-width="1.2"/><path d="M1399.8 501.3 A3.2 3.2 0 0 1 1399.8 507.7" fill="#f8f8f8" stroke="#222" stroke-width="1.2"/></svg>
<svg style="left:1338.8px;top:484.9px;width:10px;height:10px" viewBox="0 0 10 10"><rect x="0.5" y="0.5" width="9" height="9" rx="1.5" fill="url(#fg)" stroke="#777" stroke-width="0.8"/><path d="M5 2 V7.5 M2.5 5 L5 7.8 L7.5 5" stroke="#222" stroke-width="0.9" fill="none"/></svg>
<svg style="left:1338.8px;top:499.5px;width:10px;height:10px" viewBox="0 0 10 10"><rect x="0.5" y="0.5" width="9" height="9" rx="1.5" fill="url(#fg)" stroke="#777" stroke-width="0.8"/><path d="M5 2 V7.5 M2.5 5 L5 7.8 L7.5 5" stroke="#222" stroke-width="0.9" fill="none"/></svg>
<div style="left:1426.2px;top:481.4px;width:46.6px;height:46.6px;box-sizing:border-box;border:1.2px solid #2e2e30;border-radius:3px;background:linear-gradient(180deg,#acacb4,#8c8c96);box-shadow:1px 1px 1px rgba(0,0,0,0.18)"></div>
<div style="left:1439.2px;top:482.8px;width:17.2px;height:43.8px;box-sizing:border-box;border:1px solid #151515;border-radius:3px;background:linear-gradient(180deg,#444,#333)"></div>
<div style="left:1428.55px;top:500.29px;width:38.50px;height:10.5px;transform:rotate(-90deg);transform-origin:50% 50%;"><div style="left:0;top:-1.05px;font:10.5px/10.5px 'Liberation Sans',sans-serif;font-weight:bold;color:#fff;white-space:pre;transform:scaleX(1.0000);transform-origin:0 0">pDecon</div></div>
<div style="left:1430.53px;top:500.09px;font:8.5px/8.5px 'Liberation Sans', sans-serif;color:#383838;white-space:pre;">P</div>
<div style="left:1459.40px;top:485.49px;font:8.5px/8.5px 'Liberation Sans', sans-serif;color:#383838;white-space:pre;">X</div>
<div style="left:1459.40px;top:500.09px;font:8.5px/8.5px 'Liberation Sans', sans-serif;color:#383838;white-space:pre;">Y</div>
<div style="left:1459.40px;top:514.89px;font:8.5px/8.5px 'Liberation Sans', sans-serif;color:#383838;white-space:pre;">Z</div>
<svg style="left:0;top:0;width:1917px;height:1061px" viewBox="0 0 1917 1061"><path d="M1426.7 501.3 A3.2 3.2 0 0 0 1426.7 507.7" fill="#f8f8f8" stroke="#222" stroke-width="1.2"/><path d="M1472.3 486.7 A3.2 3.2 0 0 1 1472.3 493.09999999999997" fill="#f8f8f8" stroke="#222" stroke-width="1.2"/><path d="M1472.3 501.3 A3.2 3.2 0 0 1 1472.3 507.7" fill="#f8f8f8" stroke="#222" stroke-width="1.2"/><path d="M1472.3 516.0999999999999 A3.2 3.2 0 0 1 1472.3 522.5" fill="#f8f8f8" stroke="#222" stroke-width="1.2"/></svg>
<div style="left:1491.2px;top:512.2px;width:36.1px;height:14.2px;box-sizing:border-box;border:1.2px solid #2e2e30;border-radius:2px;background:linear-gradient(180deg,#fbf870,#f2ec40);box-shadow:1px 1px 1px rgba(0,0,0,0.18)"></div>
<div style="left:1505.00px;top:515.33px;font:8.2px/8.2px 'Liberation Sans', sans-serif;color:#9a9a30;white-space:pre;transform:scaleX(0.8771);transform-origin:0 0;">1</div>
<svg style="left:0;top:0;width:1917px;height:1061px" viewBox="0 0 1917 1061"><path d="M1491.7 516.0999999999999 A3.2 3.2 0 0 0 1491.7 522.5" fill="#f8f8f8" stroke="#222" stroke-width="1.2"/><path d="M1526.8 516.0999999999999 A3.2 3.2 0 0 1 1526.8 522.5" fill="#f8f8f8" stroke="#222" stroke-width="1.2"/></svg>
<div style="left:1539px;top:481.4px;width:49.1px;height:46.6px;box-sizing:border-box;border:1.2px solid #2e2e30;border-radius:3px;background:linear-gradient(180deg,#acacb4,#8c8c96);box-shadow:1px 1px 1px rgba(0,0,0,0.18)"></div>
<div style="left:1552.7px;top:482.8px;width:17.4px;height:43.8px;box-sizing:border-box;border:1px solid #151515;border-radius:3px;background:linear-gradient(180deg,#444,#333)"></div>
<div style="left:1556.15px;top:500.29px;width:10.50px;height:10.5px;transform:rotate(-90deg);transform-origin:50% 50%;"><div style="left:0;top:-1.05px;font:10.5px/10.5px 'Liberation Sans',sans-serif;font-weight:bold;color:#fff;white-space:pre;transform:scaleX(1.0000);transform-origin:0 0">Pt</div></div>
<div style="left:1544.03px;top:485.49px;font:8.5px/8.5px 'Liberation Sans', sans-serif;color:#383838;white-space:pre;">X</div>
<div style="left:1544.03px;top:500.09px;font:8.5px/8.5px 'Liberation Sans', sans-serif;color:#383838;white-space:pre;">Y</div>
<div style="left:1544.51px;top:514.89px;font:8.5px/8.5px 'Liberation Sans', sans-serif;color:#383838;white-space:pre;">Z</div>
<div style="left:1573.10px;top:500.09px;font:8.5px/8.5px 'Liberation Sans', sans-serif;color:#383838;white-space:pre;">Pt</div>
<svg style="left:0;top:0;width:1917px;height:1061px" viewBox="0 0 1917 1061"><path d="M1539.5 486.7 A3.2 3.2 0 0 0 1539.5 493.09999999999997" fill="#f8f8f8" stroke="#222" stroke-width="1.2"/><path d="M1539.5 501.3 A3.2 3.2 0 0 0 1539.5 507.7" fill="#f8f8f8" stroke="#222" stroke-width="1.2"/><path d="M1539.5 516.0999999999999 A3.2 3.2 0 0 0 1539.5 522.5" fill="#f8f8f8" stroke="#222" stroke-width="1.2"/><path d="M1587.6 501.3 A3.2 3.2 0 0 1 1587.6 507.7" fill="#f8f8f8" stroke="#222" stroke-width="1.2"/></svg>
<div style="left:1601.2px;top:495.5px;width:48.4px;height:35.4px;box-sizing:border-box;border:1.2px solid #2e2e30;border-radius:3px;background:linear-gradient(180deg,#acacb4,#8c8c96);box-shadow:1px 1px 1px rgba(0,0,0,0.18)"></div>
<div style="left:1614.5px;top:496.9px;width:17.8px;height:32.6px;box-sizing:border-box;border:1px solid #151515;border-radius:3px;background:linear-gradient(180deg,#444,#333)"></div>
<div style="left:1609.11px;top:508.79px;width:28.59px;height:10.5px;transform:rotate(-90deg);transform-origin:50% 50%;"><div style="left:0;top:-1.05px;font:10.5px/10.5px 'Liberation Sans',sans-serif;font-weight:bold;color:#fff;white-space:pre;transform:scaleX(1.0000);transform-origin:0 0">PLine</div></div>
<div style="left:1605.83px;top:500.09px;font:8.5px/8.5px 'Liberation Sans', sans-serif;color:#383838;white-space:pre;">V</div>
<div style="left:1605.36px;top:515.99px;font:8.5px/8.5px 'Liberation Sans', sans-serif;color:#383838;white-space:pre;">C</div>
<div style="left:1635.30px;top:507.79px;font:8.5px/8.5px 'Liberation Sans', sans-serif;color:#383838;white-space:pre;">Pl</div>
<svg style="left:0;top:0;width:1917px;height:1061px" viewBox="0 0 1917 1061"><path d="M1601.7 501.3 A3.2 3.2 0 0 0 1601.7 507.7" fill="#f8f8f8" stroke="#222" stroke-width="1.2"/><path d="M1601.7 517.1999999999999 A3.2 3.2 0 0 0 1601.7 523.6" fill="#f8f8f8" stroke="#222" stroke-width="1.2"/><path d="M1649.1 509.00000000000006 A3.2 3.2 0 0 1 1649.1 515.4000000000001" fill="#f8f8f8" stroke="#222" stroke-width="1.2"/></svg>
<div style="left:1663px;top:485.4px;width:45.7px;height:55.8px;box-sizing:border-box;border:1.2px solid #2e2e30;border-radius:3px;background:linear-gradient(180deg,#acacb4,#8c8c96);box-shadow:1px 1px 1px rgba(0,0,0,0.18)"></div>
<div style="left:1676.2px;top:486.8px;width:17.6px;height:53.0px;box-sizing:border-box;border:1px solid #151515;border-radius:3px;background:linear-gradient(180deg,#444,#333)"></div>
<div style="left:1660.50px;top:508.89px;width:49.00px;height:10.5px;transform:rotate(-90deg);transform-origin:50% 50%;"><div style="left:0;top:-1.05px;font:10.5px/10.5px 'Liberation Sans',sans-serif;font-weight:bold;color:#fff;white-space:pre;transform:scaleX(1.0000);transform-origin:0 0">Boundary</div></div>
<div style="left:1667.53px;top:507.79px;font:8.5px/8.5px 'Liberation Sans', sans-serif;color:#383838;white-space:pre;">E</div>
<div style="left:1696.80px;top:507.79px;font:8.5px/8.5px 'Liberation Sans', sans-serif;color:#383838;white-space:pre;">S</div>
<svg style="left:0;top:0;width:1917px;height:1061px" viewBox="0 0 1917 1061"><path d="M1663.5 509.00000000000006 A3.2 3.2 0 0 0 1663.5 515.4000000000001" fill="#f8f8f8" stroke="#222" stroke-width="1.2"/><path d="M1708.2 509.00000000000006 A3.2 3.2 0 0 1 1708.2 515.4000000000001" fill="#f8f8f8" stroke="#222" stroke-width="1.2"/></svg>
<svg style="left:1715px;top:519px;width:18px;height:18px" viewBox="0 0 18 18"><g fill="none" stroke="rgba(120,100,150,0.35)" stroke-width="0.6"><circle cx="9" cy="9" r="3.5"/><circle cx="9" cy="9" r="5.5"/><circle cx="9" cy="9" r="7.5"/></g></svg>
<div style="left:1724.3px;top:520.4px;width:83.4px;height:15.1px;box-sizing:border-box;border:1.2px solid #2e2e30;border-radius:4px;background:linear-gradient(180deg,#acacb4,#8c8c96);box-shadow:1px 1px 1px rgba(0,0,0,0.18)"></div>
<div style="left:1729.00px;top:523.98px;font:8.2px/8.2px 'Liberation Sans', sans-serif;color:#2a2a2a;white-space:pre;transform:scaleX(0.8567);transform-origin:0 0;">CASE GRAPH COLOR</div>
<svg style="left:0;top:0;width:1917px;height:1061px" viewBox="0 0 1917 1061"><path d="M1724.8 524.75 A3.2 3.2 0 0 0 1724.8 531.1500000000001" fill="#f8f8f8" stroke="#222" stroke-width="1.2"/><path d="M1807.2 524.75 A3.2 3.2 0 0 1 1807.2 531.1500000000001" fill="#f8f8f8" stroke="#222" stroke-width="1.2"/></svg>
<svg style="left:0;top:0;width:1917px;height:1061px" viewBox="0 0 1917 1061"><defs><linearGradient id="pm503" x1="0" y1="0" x2="0" y2="1"><stop offset="0" stop-color="#eaeaea"/><stop offset="1" stop-color="#d2d2d2"/></linearGradient></defs><path d="M1822.9 503.4 H1860.4 L1860.4 503.4 L1863.9 506.8 L1860.4 510.2 L1863.9 513.6 L1860.4 517.0 L1863.9 520.4 L1860.4 523.8 L1863.9 527.2 L1860.4 530.6 L1863.9 534.0 L1860.4 537.4 L1863.9 540.8 L1860.4 544.3 L1863.9 547.7 L1860.4 551.1 L1863.9 554.5 L1860.4 557.9 L1863.9 561.3 L1860.4 564.7 L1863.9 568.1 L1860.4 571.5 L1863.9 574.9 L1860.4 578.3 H1822.9 Q1819.9 578.3 1819.9 575.3 V506.4 Q1819.9 503.4 1822.9 503.4 Z" fill="url(#pm503)" stroke="#333" stroke-width="1.1"/></svg>
<div style="left:1838.5px;top:504.8px;width:18.1px;height:72.1px;box-sizing:border-box;border:1px solid #151515;border-radius:3px;background:linear-gradient(180deg,#444,#333)"></div>
<div style="left:1818.66px;top:536.44px;width:57.78px;height:10.5px;transform:rotate(-90deg);transform-origin:50% 50%;"><div style="left:0;top:-1.05px;font:10.5px/10.5px 'Liberation Sans',sans-serif;font-weight:bold;color:#fff;white-space:pre;transform:scaleX(1.0000);transform-origin:0 0">PreviewMat</div></div>
<div style="left:1828.39px;top:507.09px;font:8.5px/8.5px 'Liberation Sans', sans-serif;color:#383838;white-space:pre;">G</div>
<div style="left:1822.72px;top:521.99px;font:8.5px/8.5px 'Liberation Sans', sans-serif;color:#383838;white-space:pre;">DC</div>
<div style="left:1829.81px;top:536.09px;font:8.5px/8.5px 'Liberation Sans', sans-serif;color:#383838;white-space:pre;">T</div>
<div style="left:1823.19px;top:550.89px;font:8.5px/8.5px 'Liberation Sans', sans-serif;color:#383838;white-space:pre;">DB</div>
<div style="left:1824.14px;top:565.49px;font:8.5px/8.5px 'Liberation Sans', sans-serif;color:#383838;white-space:pre;">TB</div>
<svg style="left:0;top:0;width:1917px;height:1061px" viewBox="0 0 1917 1061"><path d="M1820.4 508.3 A3.2 3.2 0 0 0 1820.4 514.7" fill="#f8f8f8" stroke="#222" stroke-width="1.2"/><path d="M1820.4 523.1999999999999 A3.2 3.2 0 0 0 1820.4 529.6" fill="#f8f8f8" stroke="#222" stroke-width="1.2"/><path d="M1820.4 537.3 A3.2 3.2 0 0 0 1820.4 543.7" fill="#f8f8f8" stroke="#222" stroke-width="1.2"/><path d="M1820.4 552.0999999999999 A3.2 3.2 0 0 0 1820.4 558.5" fill="#f8f8f8" stroke="#222" stroke-width="1.2"/><path d="M1820.4 566.6999999999999 A3.2 3.2 0 0 0 1820.4 573.1" fill="#f8f8f8" stroke="#222" stroke-width="1.2"/></svg>
<svg style="left:1028px;top:605px;width:18px;height:18px" viewBox="0 0 18 18"><g fill="none" stroke="rgba(120,100,150,0.35)" stroke-width="0.6"><circle cx="9" cy="9" r="3.5"/><circle cx="9" cy="9" r="5.5"/><circle cx="9" cy="9" r="7.5"/></g></svg>
<div style="left:1038.1px;top:606.2px;width:119.3px;height:15.4px;box-sizing:border-box;border:1.2px solid #2e2e30;border-radius:4px;background:linear-gradient(180deg,#acacb4,#8c8c96);box-shadow:1px 1px 1px rgba(0,0,0,0.18)"></div>
<div style="left:1043.00px;top:609.93px;font:8.2px/8.2px 'Liberation Sans', sans-serif;color:#2a2a2a;white-space:pre;transform:scaleX(0.8883);transform-origin:0 0;">DEATH COUNT GRAPH POINTS</div>
<svg style="left:0;top:0;width:1917px;height:1061px" viewBox="0 0 1917 1061"><path d="M1038.6 610.7 A3.2 3.2 0 0 0 1038.6 617.1000000000001" fill="#f8f8f8" stroke="#222" stroke-width="1.2"/><path d="M1156.9 610.7 A3.2 3.2 0 0 1 1156.9 617.1000000000001" fill="#f8f8f8" stroke="#222" stroke-width="1.2"/></svg>
<div style="left:1102.3px;top:631.4px;width:44.5px;height:32.3px;box-sizing:border-box;border:1.2px solid #2e2e30;border-radius:3px;background:linear-gradient(180deg,#acacb4,#8c8c96);box-shadow:1px 1px 1px rgba(0,0,0,0.18)"></div>
<div style="left:1116.8px;top:632.8px;width:16.9px;height:29.5px;box-sizing:border-box;border:1px solid #151515;border-radius:3px;background:linear-gradient(180deg,#444,#333)"></div>
<div style="left:1113.58px;top:643.14px;width:23.33px;height:10.5px;transform:rotate(-90deg);transform-origin:50% 50%;"><div style="left:0;top:-1.05px;font:10.5px/10.5px 'Liberation Sans',sans-serif;font-weight:bold;color:#fff;white-space:pre;transform:scaleX(1.0000);transform-origin:0 0">Dom</div></div>
<div style="left:1108.13px;top:635.19px;font:8.5px/8.5px 'Liberation Sans', sans-serif;color:#383838;white-space:pre;">A</div>
<div style="left:1108.13px;top:649.89px;font:8.5px/8.5px 'Liberation Sans', sans-serif;color:#383838;white-space:pre;">B</div>
<div style="left:1136.70px;top:642.59px;font:8.5px/8.5px 'Liberation Sans', sans-serif;color:#383838;white-space:pre;">I</div>
<svg style="left:0;top:0;width:1917px;height:1061px" viewBox="0 0 1917 1061"><path d="M1102.8 636.4 A3.2 3.2 0 0 0 1102.8 642.8000000000001" fill="#f8f8f8" stroke="#222" stroke-width="1.2"/><path d="M1102.8 651.0999999999999 A3.2 3.2 0 0 0 1102.8 657.5" fill="#f8f8f8" stroke="#222" stroke-width="1.2"/><path d="M1146.3 643.8 A3.2 3.2 0 0 1 1146.3 650.2" fill="#f8f8f8" stroke="#222" stroke-width="1.2"/></svg>
<div style="left:1168.2px;top:605.3px;width:47.8px;height:45.9px;box-sizing:border-box;border:1.2px solid #2e2e30;border-radius:3px;background:linear-gradient(180deg,#acacb4,#8c8c96);box-shadow:1px 1px 1px rgba(0,0,0,0.18)"></div>
<div style="left:1184.1px;top:606.7px;width:17.8px;height:43.1px;box-sizing:border-box;border:1px solid #151515;border-radius:3px;background:linear-gradient(180deg,#444,#333)"></div>
<div style="left:1174.91px;top:623.84px;width:36.17px;height:10.5px;transform:rotate(-90deg);transform-origin:50% 50%;"><div style="left:0;top:-1.05px;font:10.5px/10.5px 'Liberation Sans',sans-serif;font-weight:bold;color:#fff;white-space:pre;transform:scaleX(1.0000);transform-origin:0 0">SubSet</div></div>
<div style="left:1176.37px;top:609.09px;font:8.5px/8.5px 'Liberation Sans', sans-serif;color:#383838;white-space:pre;">L</div>
<div style="left:1174.96px;top:623.59px;font:8.5px/8.5px 'Liberation Sans', sans-serif;color:#383838;white-space:pre;">D</div>
<div style="left:1173.08px;top:638.29px;font:8.5px/8.5px 'Liberation Sans', sans-serif;color:#383838;white-space:pre;">W</div>
<div style="left:1204.90px;top:612.79px;font:8.5px/8.5px 'Liberation Sans', sans-serif;color:#383838;white-space:pre;">L</div>
<div style="left:1204.90px;top:634.59px;font:8.5px/8.5px 'Liberation Sans', sans-serif;color:#383838;white-space:pre;">I</div>
<svg style="left:0;top:0;width:1917px;height:1061px" viewBox="0 0 1917 1061"><path d="M1168.7 610.3 A3.2 3.2 0 0 0 1168.7 616.7" fill="#f8f8f8" stroke="#222" stroke-width="1.2"/><path d="M1168.7 624.8 A3.2 3.2 0 0 0 1168.7 631.2" fill="#f8f8f8" stroke="#222" stroke-width="1.2"/><path d="M1168.7 639.5 A3.2 3.2 0 0 0 1168.7 645.9000000000001" fill="#f8f8f8" stroke="#222" stroke-width="1.2"/><path d="M1215.5 614.0 A3.2 3.2 0 0 1 1215.5 620.4000000000001" fill="#f8f8f8" stroke="#222" stroke-width="1.2"/><path d="M1215.5 635.8 A3.2 3.2 0 0 1 1215.5 642.2" fill="#f8f8f8" stroke="#222" stroke-width="1.2"/></svg>
<div style="left:1231.1px;top:626.3px;width:89.5px;height:14.2px;box-sizing:border-box;border:1.2px solid #2e2e30;border-radius:4px;background:linear-gradient(180deg,#acacb4,#8c8c96);box-shadow:1px 1px 1px rgba(0,0,0,0.18)"></div>
<div style="left:1235.50px;top:629.43px;font:8.2px/8.2px 'Liberation Sans', sans-serif;color:#2a2a2a;white-space:pre;transform:scaleX(0.8809);transform-origin:0 0;">CURRENT DATE POINT</div>
<svg style="left:0;top:0;width:1917px;height:1061px" viewBox="0 0 1917 1061"><path d="M1231.6 630.1999999999999 A3.2 3.2 0 0 0 1231.6 636.6" fill="#f8f8f8" stroke="#222" stroke-width="1.2"/><path d="M1320.1 630.1999999999999 A3.2 3.2 0 0 1 1320.1 636.6" fill="#f8f8f8" stroke="#222" stroke-width="1.2"/></svg>
<div style="left:1337.3px;top:610.3px;width:63.4px;height:46.2px;box-sizing:border-box;border:1.2px solid #2e2e30;border-radius:3px;background:linear-gradient(180deg,#acacb4,#8c8c96);box-shadow:1px 1px 1px rgba(0,0,0,0.18)"></div>
<div style="left:1367.6px;top:611.7px;width:17.9px;height:43.4px;box-sizing:border-box;border:1px solid #151515;border-radius:3px;background:linear-gradient(180deg,#444,#333)"></div>
<div style="left:1361.09px;top:628.99px;width:30.93px;height:10.5px;transform:rotate(-90deg);transform-origin:50% 50%;"><div style="left:0;top:-1.05px;font:10.5px/10.5px 'Liberation Sans',sans-serif;font-weight:bold;color:#fff;white-space:pre;transform:scaleX(1.0000);transform-origin:0 0">Merge</div></div>
<div style="left:1353.73px;top:614.09px;font:8.5px/8.5px 'Liberation Sans', sans-serif;color:#383838;white-space:pre;">D1</div>
<div style="left:1353.73px;top:628.69px;font:8.5px/8.5px 'Liberation Sans', sans-serif;color:#383838;white-space:pre;">D2</div>
<div style="left:1353.73px;top:643.19px;font:8.5px/8.5px 'Liberation Sans', sans-serif;color:#383838;white-space:pre;">D3</div>
<div style="left:1388.50px;top:628.69px;font:8.5px/8.5px 'Liberation Sans', sans-serif;color:#383838;white-space:pre;">R</div>
<svg style="left:0;top:0;width:1917px;height:1061px" viewBox="0 0 1917 1061"><path d="M1337.8 615.3 A3.2 3.2 0 0 0 1337.8 621.7" fill="#f8f8f8" stroke="#222" stroke-width="1.2"/><path d="M1337.8 629.9 A3.2 3.2 0 0 0 1337.8 636.3000000000001" fill="#f8f8f8" stroke="#222" stroke-width="1.2"/><path d="M1337.8 644.4 A3.2 3.2 0 0 0 1337.8 650.8000000000001" fill="#f8f8f8" stroke="#222" stroke-width="1.2"/><path d="M1400.2 629.9 A3.2 3.2 0 0 1 1400.2 636.3000000000001" fill="#f8f8f8" stroke="#222" stroke-width="1.2"/></svg>
<svg style="left:1339.8px;top:613.5px;width:10px;height:10px" viewBox="0 0 10 10"><rect x="0.5" y="0.5" width="9" height="9" rx="1.5" fill="url(#fg)" stroke="#777" stroke-width="0.8"/><path d="M5 2 V7.5 M2.5 5 L5 7.8 L7.5 5" stroke="#222" stroke-width="0.9" fill="none"/></svg>
<svg style="left:1339.8px;top:628.1px;width:10px;height:10px" viewBox="0 0 10 10"><rect x="0.5" y="0.5" width="9" height="9" rx="1.5" fill="url(#fg)" stroke="#777" stroke-width="0.8"/><path d="M5 2 V7.5 M2.5 5 L5 7.8 L7.5 5" stroke="#222" stroke-width="0.9" fill="none"/></svg>
<div style="left:1426.4px;top:610.3px;width:47.0px;height:46.2px;box-sizing:border-box;border:1.2px solid #2e2e30;border-radius:3px;background:linear-gradient(180deg,#acacb4,#8c8c96);box-shadow:1px 1px 1px rgba(0,0,0,0.18)"></div>
<div style="left:1439.5px;top:611.7px;width:18.1px;height:43.4px;box-sizing:border-box;border:1px solid #151515;border-radius:3px;background:linear-gradient(180deg,#444,#333)"></div>
<div style="left:1429.30px;top:628.99px;width:38.50px;height:10.5px;transform:rotate(-90deg);transform-origin:50% 50%;"><div style="left:0;top:-1.05px;font:10.5px/10.5px 'Liberation Sans',sans-serif;font-weight:bold;color:#fff;white-space:pre;transform:scaleX(1.0000);transform-origin:0 0">pDecon</div></div>
<div style="left:1430.83px;top:628.69px;font:8.5px/8.5px 'Liberation Sans', sans-serif;color:#383838;white-space:pre;">P</div>
<div style="left:1460.60px;top:614.09px;font:8.5px/8.5px 'Liberation Sans', sans-serif;color:#383838;white-space:pre;">X</div>
<div style="left:1460.60px;top:628.69px;font:8.5px/8.5px 'Liberation Sans', sans-serif;color:#383838;white-space:pre;">Y</div>
<div style="left:1460.60px;top:643.19px;font:8.5px/8.5px 'Liberation Sans', sans-serif;color:#383838;white-space:pre;">Z</div>
<svg style="left:0;top:0;width:1917px;height:1061px" viewBox="0 0 1917 1061"><path d="M1426.9 629.9 A3.2 3.2 0 0 0 1426.9 636.3000000000001" fill="#f8f8f8" stroke="#222" stroke-width="1.2"/><path d="M1472.9 615.3 A3.2 3.2 0 0 1 1472.9 621.7" fill="#f8f8f8" stroke="#222" stroke-width="1.2"/><path d="M1472.9 629.9 A3.2 3.2 0 0 1 1472.9 636.3000000000001" fill="#f8f8f8" stroke="#222" stroke-width="1.2"/><path d="M1472.9 644.4 A3.2 3.2 0 0 1 1472.9 650.8000000000001" fill="#f8f8f8" stroke="#222" stroke-width="1.2"/></svg>
<div style="left:1487.6px;top:641.3px;width:36.0px;height:14.9px;box-sizing:border-box;border:1.2px solid #2e2e30;border-radius:2px;background:linear-gradient(180deg,#fbf870,#f2ec40);box-shadow:1px 1px 1px rgba(0,0,0,0.18)"></div>
<div style="left:1501.50px;top:644.78px;font:8.2px/8.2px 'Liberation Sans', sans-serif;color:#9a9a30;white-space:pre;transform:scaleX(0.8771);transform-origin:0 0;">2</div>
<svg style="left:0;top:0;width:1917px;height:1061px" viewBox="0 0 1917 1061"><path d="M1488.1 645.55 A3.2 3.2 0 0 0 1488.1 651.95" fill="#f8f8f8" stroke="#222" stroke-width="1.2"/><path d="M1523.1 645.55 A3.2 3.2 0 0 1 1523.1 651.95" fill="#f8f8f8" stroke="#222" stroke-width="1.2"/></svg>
<div style="left:1539.4px;top:610.3px;width:49.4px;height:46.4px;box-sizing:border-box;border:1.2px solid #2e2e30;border-radius:3px;background:linear-gradient(180deg,#acacb4,#8c8c96);box-shadow:1px 1px 1px rgba(0,0,0,0.18)"></div>
<div style="left:1553.4px;top:611.7px;width:17.6px;height:43.6px;box-sizing:border-box;border:1px solid #151515;border-radius:3px;background:linear-gradient(180deg,#444,#333)"></div>
<div style="left:1556.95px;top:629.09px;width:10.50px;height:10.5px;transform:rotate(-90deg);transform-origin:50% 50%;"><div style="left:0;top:-1.05px;font:10.5px/10.5px 'Liberation Sans',sans-serif;font-weight:bold;color:#fff;white-space:pre;transform:scaleX(1.0000);transform-origin:0 0">Pt</div></div>
<div style="left:1544.73px;top:614.09px;font:8.5px/8.5px 'Liberation Sans', sans-serif;color:#383838;white-space:pre;">X</div>
<div style="left:1544.73px;top:628.69px;font:8.5px/8.5px 'Liberation Sans', sans-serif;color:#383838;white-space:pre;">Y</div>
<div style="left:1545.21px;top:643.19px;font:8.5px/8.5px 'Liberation Sans', sans-serif;color:#383838;white-space:pre;">Z</div>
<div style="left:1574.00px;top:628.69px;font:8.5px/8.5px 'Liberation Sans', sans-serif;color:#383838;white-space:pre;">Pt</div>
<svg style="left:0;top:0;width:1917px;height:1061px" viewBox="0 0 1917 1061"><path d="M1539.9 615.3 A3.2 3.2 0 0 0 1539.9 621.7" fill="#f8f8f8" stroke="#222" stroke-width="1.2"/><path d="M1539.9 629.9 A3.2 3.2 0 0 0 1539.9 636.3000000000001" fill="#f8f8f8" stroke="#222" stroke-width="1.2"/><path d="M1539.9 644.4 A3.2 3.2 0 0 0 1539.9 650.8000000000001" fill="#f8f8f8" stroke="#222" stroke-width="1.2"/><path d="M1588.3 629.9 A3.2 3.2 0 0 1 1588.3 636.3000000000001" fill="#f8f8f8" stroke="#222" stroke-width="1.2"/></svg>
<div style="left:1601.6px;top:624.2px;width:48.8px;height:35.2px;box-sizing:border-box;border:1.2px solid #2e2e30;border-radius:3px;background:linear-gradient(180deg,#acacb4,#8c8c96);box-shadow:1px 1px 1px rgba(0,0,0,0.18)"></div>
<div style="left:1615.1px;top:625.6px;width:18.1px;height:32.4px;box-sizing:border-box;border:1px solid #151515;border-radius:3px;background:linear-gradient(180deg,#444,#333)"></div>
<div style="left:1609.86px;top:637.39px;width:28.59px;height:10.5px;transform:rotate(-90deg);transform-origin:50% 50%;"><div style="left:0;top:-1.05px;font:10.5px/10.5px 'Liberation Sans',sans-serif;font-weight:bold;color:#fff;white-space:pre;transform:scaleX(1.0000);transform-origin:0 0">PLine</div></div>
<div style="left:1606.43px;top:628.69px;font:8.5px/8.5px 'Liberation Sans', sans-serif;color:#383838;white-space:pre;">V</div>
<div style="left:1605.96px;top:644.59px;font:8.5px/8.5px 'Liberation Sans', sans-serif;color:#383838;white-space:pre;">C</div>
<div style="left:1636.20px;top:636.49px;font:8.5px/8.5px 'Liberation Sans', sans-serif;color:#383838;white-space:pre;">Pl</div>
<svg style="left:0;top:0;width:1917px;height:1061px" viewBox="0 0 1917 1061"><path d="M1602.1 629.9 A3.2 3.2 0 0 0 1602.1 636.3000000000001" fill="#f8f8f8" stroke="#222" stroke-width="1.2"/><path d="M1602.1 645.8 A3.2 3.2 0 0 0 1602.1 652.2" fill="#f8f8f8" stroke="#222" stroke-width="1.2"/><path d="M1649.9 637.6999999999999 A3.2 3.2 0 0 1 1649.9 644.1" fill="#f8f8f8" stroke="#222" stroke-width="1.2"/></svg>
<div style="left:1663.3px;top:613.7px;width:46.1px;height:56.0px;box-sizing:border-box;border:1.2px solid #2e2e30;border-radius:3px;background:linear-gradient(180deg,#acacb4,#8c8c96);box-shadow:1px 1px 1px rgba(0,0,0,0.18)"></div>
<div style="left:1676.4px;top:615.1px;width:18.5px;height:53.2px;box-sizing:border-box;border:1px solid #151515;border-radius:3px;background:linear-gradient(180deg,#444,#333)"></div>
<div style="left:1661.15px;top:637.29px;width:49.00px;height:10.5px;transform:rotate(-90deg);transform-origin:50% 50%;"><div style="left:0;top:-1.05px;font:10.5px/10.5px 'Liberation Sans',sans-serif;font-weight:bold;color:#fff;white-space:pre;transform:scaleX(1.0000);transform-origin:0 0">Boundary</div></div>
<div style="left:1667.73px;top:636.89px;font:8.5px/8.5px 'Liberation Sans', sans-serif;color:#383838;white-space:pre;">E</div>
<div style="left:1697.90px;top:636.89px;font:8.5px/8.5px 'Liberation Sans', sans-serif;color:#383838;white-space:pre;">S</div>
<svg style="left:0;top:0;width:1917px;height:1061px" viewBox="0 0 1917 1061"><path d="M1663.8 638.0999999999999 A3.2 3.2 0 0 0 1663.8 644.5" fill="#f8f8f8" stroke="#222" stroke-width="1.2"/><path d="M1708.9 638.0999999999999 A3.2 3.2 0 0 1 1708.9 644.5" fill="#f8f8f8" stroke="#222" stroke-width="1.2"/></svg>
<svg style="left:1712px;top:646px;width:18px;height:18px" viewBox="0 0 18 18"><g fill="none" stroke="rgba(120,100,150,0.35)" stroke-width="0.6"><circle cx="9" cy="9" r="3.5"/><circle cx="9" cy="9" r="5.5"/><circle cx="9" cy="9" r="7.5"/></g></svg>
<div style="left:1721.1px;top:647.6px;width:88.8px;height:14.9px;box-sizing:border-box;border:1.2px solid #2e2e30;border-radius:4px;background:linear-gradient(180deg,#acacb4,#8c8c96);box-shadow:1px 1px 1px rgba(0,0,0,0.18)"></div>
<div style="left:1726.00px;top:651.08px;font:8.2px/8.2px 'Liberation Sans', sans-serif;color:#2a2a2a;white-space:pre;transform:scaleX(0.8661);transform-origin:0 0;">DEATH GRAPH COLOR</div>
<svg style="left:0;top:0;width:1917px;height:1061px" viewBox="0 0 1917 1061"><path d="M1721.6 651.8499999999999 A3.2 3.2 0 0 0 1721.6 658.25" fill="#f8f8f8" stroke="#222" stroke-width="1.2"/><path d="M1809.4 651.8499999999999 A3.2 3.2 0 0 1 1809.4 658.25" fill="#f8f8f8" stroke="#222" stroke-width="1.2"/></svg>
<div style="left:1663.2px;top:673.6px;width:142.2px;height:14.7px;box-sizing:border-box;border:1.2px solid #2e2e30;border-radius:3px;background:linear-gradient(180deg,#ececec,#d0d0d0);overflow:hidden;box-shadow:1px 1px 1px rgba(0,0,0,0.18)"><div style="left:0;top:0;width:55.2px;height:15px;background:linear-gradient(180deg,#acacb4,#8c8c96);border-right:1px solid #555"></div></div>
<div style="left:1667.00px;top:676.69px;font:8.5px/8.5px 'Liberation Sans', sans-serif;color:#222;white-space:pre;transform:scaleX(0.9099);transform-origin:0 0;">Transparency</div>
<svg style="left:1720px;top:674px;width:86px;height:15px" viewBox="1720 674 86 15"><path d="M1727.5 678 V683.5 H1798 V678 M1735 681.5 V683.5 M1742 681.5 V683.5 M1749 681.5 V683.5 M1756 681.5 V683.5 M1770 681.5 V683.5 M1777 681.5 V683.5 M1784 681.5 V683.5 M1791 681.5 V683.5" stroke="#9a9a9a" stroke-width="0.7" fill="none"/><circle cx="1780" cy="681.4" r="2.3" fill="#fff" stroke="#111" stroke-width="1.3"/></svg>
<div style="left:1759.50px;top:676.69px;font:8.5px/8.5px 'Liberation Sans', sans-serif;color:#222;white-space:pre;transform:scaleX(0.8462);transform-origin:0 0;">0.75</div>
<svg style="left:0;top:0;width:1917px;height:1061px" viewBox="0 0 1917 1061"><path d="M1804.9 677.8 A3.2 3.2 0 0 1 1804.9 684.2" fill="#f8f8f8" stroke="#222" stroke-width="1.2"/></svg>
<svg style="left:0;top:0;width:1917px;height:1061px" viewBox="0 0 1917 1061"><defs><linearGradient id="pm631" x1="0" y1="0" x2="0" y2="1"><stop offset="0" stop-color="#eaeaea"/><stop offset="1" stop-color="#d2d2d2"/></linearGradient></defs><path d="M1822.7 631.7 H1860.8 L1860.8 631.7 L1864.3 635.1 L1860.8 638.5 L1864.3 642.0 L1860.8 645.4 L1864.3 648.8 L1860.8 652.2 L1864.3 655.7 L1860.8 659.1 L1864.3 662.5 L1860.8 665.9 L1864.3 669.4 L1860.8 672.8 L1864.3 676.2 L1860.8 679.6 L1864.3 683.0 L1860.8 686.5 L1864.3 689.9 L1860.8 693.3 L1864.3 696.7 L1860.8 700.2 L1864.3 703.6 L1860.8 707.0 H1822.7 Q1819.7 707 1819.7 704 V634.7 Q1819.7 631.7 1822.7 631.7 Z" fill="url(#pm631)" stroke="#333" stroke-width="1.1"/></svg>
<div style="left:1839.3px;top:633.1px;width:17.5px;height:72.5px;box-sizing:border-box;border:1px solid #151515;border-radius:3px;background:linear-gradient(180deg,#444,#333)"></div>
<div style="left:1819.16px;top:664.94px;width:57.78px;height:10.5px;transform:rotate(-90deg);transform-origin:50% 50%;"><div style="left:0;top:-1.05px;font:10.5px/10.5px 'Liberation Sans',sans-serif;font-weight:bold;color:#fff;white-space:pre;transform:scaleX(1.0000);transform-origin:0 0">PreviewMat</div></div>
<div style="left:1829.19px;top:635.79px;font:8.5px/8.5px 'Liberation Sans', sans-serif;color:#383838;white-space:pre;">G</div>
<div style="left:1823.52px;top:649.89px;font:8.5px/8.5px 'Liberation Sans', sans-serif;color:#383838;white-space:pre;">DC</div>
<div style="left:1830.61px;top:664.59px;font:8.5px/8.5px 'Liberation Sans', sans-serif;color:#383838;white-space:pre;">T</div>
<div style="left:1823.99px;top:679.29px;font:8.5px/8.5px 'Liberation Sans', sans-serif;color:#383838;white-space:pre;">DB</div>
<div style="left:1824.94px;top:693.39px;font:8.5px/8.5px 'Liberation Sans', sans-serif;color:#383838;white-space:pre;">TB</div>
<svg style="left:0;top:0;width:1917px;height:1061px" viewBox="0 0 1917 1061"><path d="M1820.2 637.0 A3.2 3.2 0 0 0 1820.2 643.4000000000001" fill="#f8f8f8" stroke="#222" stroke-width="1.2"/><path d="M1820.2 651.0999999999999 A3.2 3.2 0 0 0 1820.2 657.5" fill="#f8f8f8" stroke="#222" stroke-width="1.2"/><path d="M1820.2 665.8 A3.2 3.2 0 0 0 1820.2 672.2" fill="#f8f8f8" stroke="#222" stroke-width="1.2"/><path d="M1820.2 680.5 A3.2 3.2 0 0 0 1820.2 686.9000000000001" fill="#f8f8f8" stroke="#222" stroke-width="1.2"/><path d="M1820.2 694.5999999999999 A3.2 3.2 0 0 0 1820.2 701.0" fill="#f8f8f8" stroke="#222" stroke-width="1.2"/></svg>
<svg style="left:965px;top:172px;width:22px;height:24px" viewBox="0 0 22 24"><path d="M5 1 H13 L15 3 V8 H5 Z" fill="#f0f0f0" stroke="#777" stroke-width="0.8"/><path d="M2 9 H8 L10 7 H20 V22 H2 Z" fill="#70c040" stroke="#2d6a10" stroke-width="1"/><path d="M2 22 L5 12 H20 V22 Z" fill="#8ad85a" stroke="#2d6a10" stroke-width="0.8"/></svg>
<svg style="left:994px;top:172px;width:24px;height:24px" viewBox="0 0 24 24"><rect x="1" y="1" width="22" height="22" rx="2" fill="#1a6aff" stroke="#0a2a90" stroke-width="1.2"/><rect x="5" y="2" width="14" height="8" fill="#e8e8e8"/><rect x="6" y="4" width="12" height="1.5" fill="#bbb"/><rect x="6" y="14" width="12" height="8" fill="#c0c0c0"/><rect x="7.5" y="16" width="4" height="5" fill="#1a6aff"/></svg>
<div style="left:1025px;top:174px;width:1px;height:22px;background:#c8c8c8;"></div>
<div style="left:1030.3px;top:173.2px;width:135.1px;height:22.4px;box-sizing:border-box;border:1px solid #9a9a9a;border-radius:2px;background:#fff"></div>
<div style="left:1033.50px;top:178.23px;font:12px/12px 'Liberation Sans', sans-serif;color:#111;white-space:pre;transform:scaleX(0.8952);transform-origin:0 0;">72%</div>
<svg style="left:1150px;top:179px;width:12px;height:10px" viewBox="0 0 12 10"><path d="M1 2 L6 7 L11 2" stroke="#444" stroke-width="1" fill="none"/></svg>
<svg style="left:1172px;top:173px;width:23px;height:22px" viewBox="0 0 23 22"><path d="M1 8 V1 H8 M15 1 H22 V8 M22 14 V21 H15 M8 21 H1 V14" stroke="#1a1a1a" stroke-width="3" fill="none"/><path d="M9.5 9 L13.5 13 M13.5 9 L9.5 13" stroke="#111" stroke-width="1.5"/></svg>
<svg style="left:1200px;top:182px;width:8px;height:5px" viewBox="0 0 8 5"><path d="M0 0 H7 L3.5 4 Z" fill="#111"/></svg>
<svg style="left:1213px;top:176px;width:24px;height:16px" viewBox="0 0 24 16"><path d="M1 8 Q12 -3 23 8 Q12 19 1 8 Z" fill="#fff" stroke="#222" stroke-width="1.3"/><circle cx="12" cy="8" r="5.5" fill="#4ab0f0" stroke="#1a5a9a" stroke-width="0.8"/><circle cx="12" cy="8" r="2.3" fill="#000"/><circle cx="10" cy="5.5" r="1.2" fill="#fff"/></svg>
<svg style="left:1242px;top:182px;width:8px;height:5px" viewBox="0 0 8 5"><path d="M0 0 H7 L3.5 4 Z" fill="#111"/></svg>
<svg style="left:1254px;top:174px;width:24px;height:22px" viewBox="0 0 24 22"><path d="M4 3 Q8 4 6 10 Q3 18 6 20 Q9 21 12 17" stroke="#4a0a0a" stroke-width="1.6" fill="none"/><path d="M11 15 L21 3 L23 6 L14 18 Z" fill="#e01818"/><path d="M11 15 L14 18 L10 19 Z" fill="#e8b060"/></svg>
<svg style="left:1690px;top:168px;width:227px;height:32px" viewBox="1690 168 227 32"><defs><linearGradient id="rc" x1="0" y1="0" x2="0" y2="1"><stop offset="0" stop-color="#ff5a4a"/><stop offset="1" stop-color="#9a0000"/></linearGradient><linearGradient id="cc" x1="0" y1="0" x2="0" y2="1"><stop offset="0" stop-color="#7af4f4"/><stop offset="1" stop-color="#0a9090"/></linearGradient><linearGradient id="wc" x1="0" y1="0" x2="0" y2="1"><stop offset="0" stop-color="#ffffff"/><stop offset="1" stop-color="#bdbdbd"/></linearGradient><linearGradient id="gc" x1="0" y1="0" x2="0" y2="1"><stop offset="0" stop-color="#c0f870"/><stop offset="1" stop-color="#2a8a10"/></linearGradient><radialGradient id="bs" cx="0.35" cy="0.3" r="0.7"><stop offset="0" stop-color="#d8f0ff"/><stop offset="1" stop-color="#3a70d0"/></radialGradient><radialGradient id="os" cx="0.35" cy="0.3" r="0.75"><stop offset="0" stop-color="#ffd090"/><stop offset="0.6" stop-color="#f08010"/><stop offset="1" stop-color="#8a3000"/></radialGradient><radialGradient id="ws" cx="0.4" cy="0.3" r="0.75"><stop offset="0" stop-color="#ffffff"/><stop offset="1" stop-color="#a0a0a0"/></radialGradient></defs><g transform="translate(1705 180.5) rotate(-30)"><path d="M-3.0 -6.5 H3.0 A3.25 6.5 0 0 1 3.0 6.5 H-3.0 A3.25 6.5 0 0 1 -3.0 -6.5 Z" fill="url(#wc)" stroke="#555" stroke-width="0.9"/><ellipse cx="3.0" cy="0" rx="3.25" ry="6.5" fill="url(#wc)" stroke="#555" stroke-width="0.9"/><ellipse cx="3.0" cy="0" rx="1.8200000000000003" ry="3.7699999999999996" fill="#ddd" stroke="#555" stroke-width="0.6"/></g><path d="M1695 188.5 Q1704 180 1713.5 188.5 Q1704 197 1695 188.5 Z" fill="#333" stroke="#111" stroke-width="0.8"/><path d="M1697 191 Q1704 195 1711 191" stroke="#fff" stroke-width="0.7" fill="none"/><g transform="translate(1733 184) rotate(-42)"><path d="M-4.5 -7 H4.5 A3.5 7 0 0 1 4.5 7 H-4.5 A3.5 7 0 0 1 -4.5 -7 Z" fill="#fff" stroke="#333" stroke-width="0.9"/><ellipse cx="4.5" cy="0" rx="3.5" ry="7" fill="#fff" stroke="#333" stroke-width="0.9"/><ellipse cx="4.5" cy="0" rx="1.9600000000000002" ry="4.06" fill="#fff" stroke="#333" stroke-width="0.6"/></g><rect x="1748.7" y="170.7" width="27" height="27" fill="none" stroke="#1a78e0" stroke-width="1.3"/><g transform="translate(1762 184) rotate(-42)"><path d="M-4.75 -7.2 H4.75 A3.6 7.2 0 0 1 4.75 7.2 H-4.75 A3.6 7.2 0 0 1 -4.75 -7.2 Z" fill="url(#rc)" stroke="#5a0000" stroke-width="0.9"/><ellipse cx="4.75" cy="0" rx="3.6" ry="7.2" fill="url(#rc)" stroke="#5a0000" stroke-width="0.9"/><ellipse cx="4.75" cy="0" rx="2.0160000000000005" ry="4.176" fill="#7a0000" stroke="#5a0000" stroke-width="0.6"/></g><path d="M1784.5 174 V195" stroke="#b8b8b8" stroke-width="1"/><path d="M1794 175 L1815 195" stroke="#111" stroke-width="1"/><g transform="translate(1807 184) rotate(-42)"><path d="M-4.25 -7.2 H4.25 A3.6 7.2 0 0 1 4.25 7.2 H-4.25 A3.6 7.2 0 0 1 -4.25 -7.2 Z" fill="url(#cc)" stroke="#0a3a3a" stroke-width="0.9"/><ellipse cx="4.25" cy="0" rx="3.6" ry="7.2" fill="url(#cc)" stroke="#0a3a3a" stroke-width="0.9"/><ellipse cx="4.25" cy="0" rx="2.0160000000000005" ry="4.176" fill="#0a7070" stroke="#0a3a3a" stroke-width="0.6"/></g><g transform="translate(1834 184) rotate(-42)"><path d="M-4.75 -7.2 H4.75 A3.6 7.2 0 0 1 4.75 7.2 H-4.75 A3.6 7.2 0 0 1 -4.75 -7.2 Z" fill="#d8d8d8" stroke="#444" stroke-width="0.9"/><ellipse cx="4.75" cy="0" rx="3.6" ry="7.2" fill="#d8d8d8" stroke="#444" stroke-width="0.9"/><ellipse cx="4.75" cy="0" rx="2.0160000000000005" ry="4.176" fill="#ccc" stroke="#444" stroke-width="0.6"/><path d="M1 -7.2 H4.75 A3.6 7.2 0 0 1 4.75 7.2 H1 Z" fill="url(#gc)" stroke="#1a5a0a" stroke-width="0.7"/><ellipse cx="4.75" cy="0" rx="3.6" ry="7.2" fill="url(#gc)" stroke="#1a5a0a" stroke-width="0.7"/><ellipse cx="4.75" cy="0" rx="2" ry="4.2" fill="#2a7a10"/></g><path d="M1824 174 L1846 196" stroke="#111" stroke-width="1"/><circle cx="1862" cy="184" r="10.2" fill="url(#ws)"/><path d="M1862 173.8 A10.2 10.2 0 0 0 1862 194.2 Z" fill="url(#os)"/><path d="M1862 173.8 V194.2" stroke="#6a2000" stroke-width="1"/><path d="M1879.3 174 V195" stroke="#b8b8b8" stroke-width="1"/><path d="M1893 175 L1901 174 L1905.5 181 L1903.5 190 L1895 193.5 L1888 188 L1887 180 Z" fill="url(#bs)" stroke="#1a2a80" stroke-width="1.1"/><path d="M1910 182 H1916 L1913 185.5 Z" fill="#111"/></svg>
<div style="left:962px;top:979px;width:147px;height:28px;box-sizing:border-box;border:1.5px solid #111;background:linear-gradient(180deg,#f4f4f4,#b8b8b8);"></div>
<div style="left:1102px;top:980.5px;width:5.5px;height:25px;background:linear-gradient(90deg,#999,#666)"></div>
<svg style="left:962px;top:979px;width:147px;height:28px" viewBox="0 0 147 28"><defs><linearGradient id="yg" x1="0" y1="0" x2="0" y2="1"><stop offset="0" stop-color="#f8c020"/><stop offset="1" stop-color="#fde870"/></linearGradient></defs><rect x="2.7" y="2.3" width="22.5" height="22.9" rx="3" fill="url(#yg)" stroke="#222" stroke-width="1"/><path d="M5 20 Q7 15 9 19 Q10 12 12.5 17 Q14 8 16.5 15 Q18 6 21.5 13" stroke="#a05a00" stroke-width="1.8" fill="none"/><path d="M35.9 6.9 H53 V14 H45.9 L35.9 19.8" stroke="#111" stroke-width="1.8" fill="none"/><g fill="#fff" stroke="#111" stroke-width="1.1"><circle cx="35.9" cy="6.9" r="1.9"/><circle cx="53" cy="6.9" r="1.9"/><circle cx="53" cy="14" r="1.9"/><circle cx="45.9" cy="14" r="1.9"/><circle cx="35.9" cy="19.8" r="1.9"/></g><path d="M62.4 21.5 L77.4 6.5" stroke="#111" stroke-width="1" stroke-dasharray="1.5 1.5"/><path d="M66 19 L72.5 12.5 L70.5 10.5 H77 V17 L75 15 L68.5 21.5 Z" fill="#f0b000" stroke="#5a2a00" stroke-width="0.8"/><circle cx="62.4" cy="21.5" r="2" fill="#fff" stroke="#111" stroke-width="1"/><circle cx="77.4" cy="6.5" r="2" fill="#fff" stroke="#111" stroke-width="1"/><rect x="86.6" y="2.3" width="22.9" height="22.9" rx="3" fill="#a8a8a8" stroke="#f4f4f4" stroke-width="1.2"/><rect x="86" y="1.7" width="24" height="24" rx="3.4" fill="none" stroke="#222" stroke-width="0.8"/><path d="M87.5 4 H108.5 V9 Q104 11 101 9.5 V17 Q98 22 95.5 17 V9.5 Q92 11 87.5 9 Z" fill="#f88a10"/><text x="114.5" y="18.5" font-family="Liberation Sans" font-size="9" font-weight="bold" fill="#111">N</text><rect x="122" y="3.5" width="6.7" height="20" fill="#60c030" stroke="#2a6a10" stroke-width="0.6"/><rect x="122" y="11.5" width="6.7" height="4.5" fill="#e01010"/><path d="M128 13.7 H132.5 V10.5 L136.5 13.7 L132.5 17 V13.7" fill="#e01010" stroke="#e01010" stroke-width="1.4"/></svg>
<svg style="left:1860px;top:952px;width:56px;height:52px" viewBox="1860 952 56 52"><defs><radialGradient id="cg" cx="0.5" cy="0.5" r="0.5"><stop offset="0" stop-color="#f4f4f4"/><stop offset="1" stop-color="#b4b4b4"/></radialGradient></defs><circle cx="1889.9" cy="977.2" r="21.2" fill="#000"/><path d="M1863 980 L1869 978 L1866 985 Z" fill="#000"/><circle cx="1889.9" cy="977.2" r="19.5" fill="#fff"/><circle cx="1889.9" cy="977.2" r="18.2" fill="url(#cg)"/><g fill="#fff"><path d="M1893 961 L1898 963 L1894 967 Z"/><path d="M1873 974 L1877 971 L1878 976 Z"/><path d="M1906 981 L1902 986 L1901 980 Z"/><path d="M1884 993 L1887 988 L1890 993 Z"/></g></svg>
<div style="left:961.5px;top:1007px;width:955.5px;height:2.5px;background:#fff;"></div>
<div style="left:961.5px;top:1009.5px;width:955.5px;height:21.5px;background:#f0f0f0;"></div>
<svg style="left:963px;top:1012px;width:18px;height:18px" viewBox="0 0 18 18"><defs><radialGradient id="ig" cx="0.4" cy="0.35" r="0.65"><stop offset="0" stop-color="#6ab0ff"/><stop offset="1" stop-color="#0a2a90"/></radialGradient></defs><circle cx="9" cy="9" r="8" fill="url(#ig)"/><rect x="7" y="3" width="4" height="7" rx="1" fill="#fff"/><circle cx="9" cy="13" r="1.8" fill="#fff"/></svg>
<div style="left:983.50px;top:1015.23px;font:12px/12px 'Liberation Sans', sans-serif;color:#111;white-space:pre;transform:scaleX(0.9792);transform-origin:0 0;">Autosave complete (27 seconds ago)</div>
<div style="left:1847.50px;top:1015.23px;font:12px/12px 'Liberation Sans', sans-serif;color:#8a8a8a;white-space:pre;transform:scaleX(0.8884);transform-origin:0 0;">1.0.0007</div>
<svg style="left:1905px;top:1018px;width:12px;height:12px" viewBox="0 0 12 12"><g fill="#a8a8a8"><rect x="9" y="1" width="2" height="2"/><rect x="6" y="4" width="2" height="2"/><rect x="9" y="4" width="2" height="2"/><rect x="3" y="7" width="2" height="2"/><rect x="6" y="7" width="2" height="2"/><rect x="9" y="7" width="2" height="2"/></g></svg>
<div style="left:1262px;top:1056px;width:4px;height:5px;background:#f02424"></div>
</body></html>
